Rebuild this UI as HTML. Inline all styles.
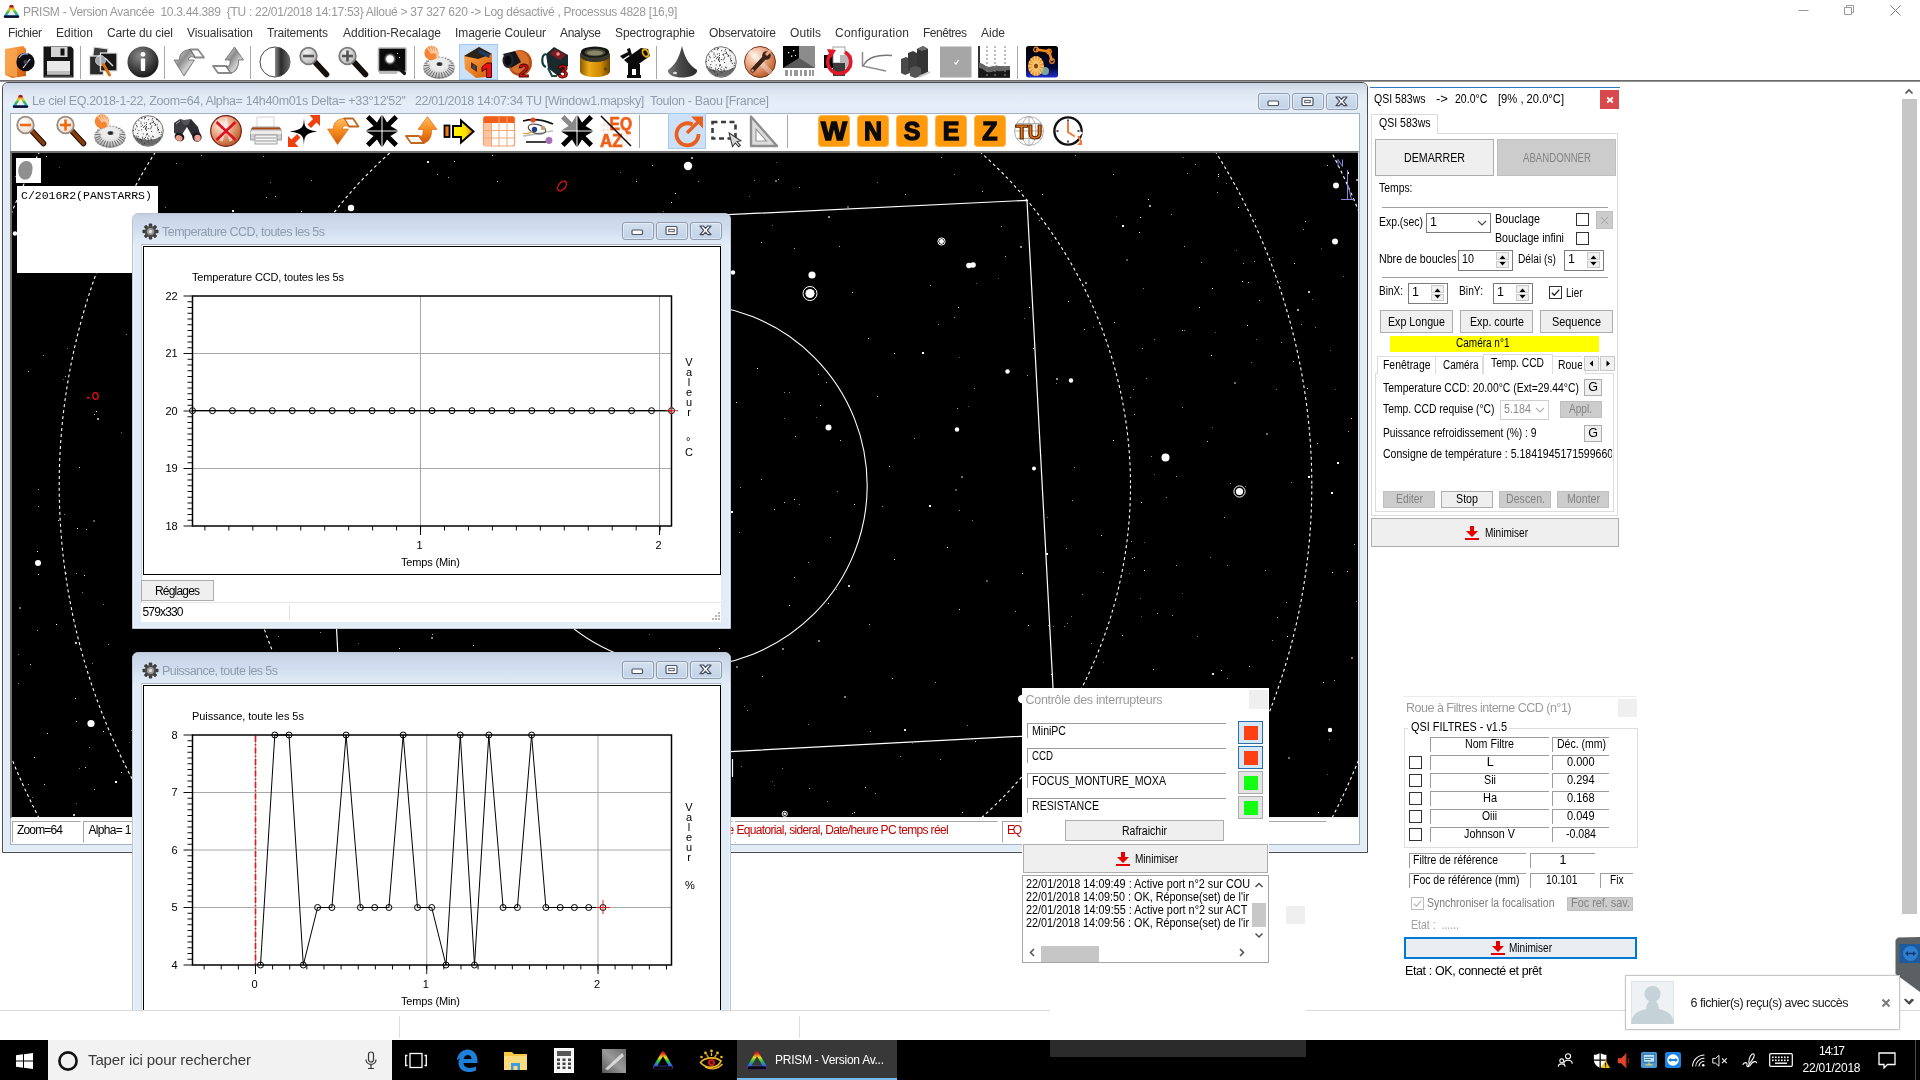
<!DOCTYPE html>
<html><head><meta charset="utf-8"><title>PRISM</title>
<style>
html,body{margin:0;padding:0;}
body{width:1920px;height:1080px;overflow:hidden;background:#fff;position:relative;font-family:"Liberation Sans",sans-serif;font-size:12px;}
.t{position:absolute;white-space:pre;line-height:1.25;font-family:"Liberation Sans",sans-serif;}
.r{position:absolute;box-sizing:border-box;}
svg{position:absolute;overflow:visible;}
.abs{position:absolute;}
</style></head>
<body>
<div id="L" style="position:absolute;left:0;top:0;width:1920px;height:1080px;will-change:transform;">
<!-- s_main -->
<div class="r " style="left:0px;top:0px;width:1920px;height:23px;background:#fff;"></div>
<svg style="left:3px;top:4px" width="17" height="15" viewBox="0 0 17 15"><defs><linearGradient id="pgl" x1="0" y1="0" x2="0" y2="1"><stop offset="0" stop-color="#e02020"/><stop offset=".3" stop-color="#e8d020"/><stop offset=".6" stop-color="#30c040"/><stop offset=".85" stop-color="#20b0e0"/><stop offset="1" stop-color="#101840"/></linearGradient></defs><path d="M8.500 2L15 12.500H2Z" fill="#f4e8f8" stroke="url(#pgl)" stroke-width="2.600" stroke-linejoin="round"/><path d="M2.300 12.600H14.700" stroke="#0c1030" stroke-width="2.400" stroke-linecap="round"/><path d="M7.300 2.200H9.700" stroke="#a01828" stroke-width="2" stroke-linecap="round"/></svg>
<span class="t" style="left:23px;top:5px;font-size:12px;color:#999;letter-spacing:-0.285px;">PRISM - Version Avancée  10.3.44.389  {TU : 22/01/2018 14:17:53} Alloué &gt; 37 327 620 -&gt; Log désactivé , Processus 4828 [16,9]</span>
<svg style="left:1798px;top:4px" width="110" height="14" viewBox="0 0 110 14"><path d="M0.5 6.5h10" stroke="#999" stroke-width="1"/><path d="M46.5 3.5h7v7h-7z M48.5 3.5v-2h7v7h-2" fill="none" stroke="#999" stroke-width="1"/><path d="M92.500 1.500l10 10M102.500 1.500l-10 10" stroke="#808080" stroke-width="1"/></svg>
<span class="t" style="left:8px;top:25.5px;font-size:12px;color:#333;letter-spacing:-0.336px;">Fichier</span>
<span class="t" style="left:56px;top:25.5px;font-size:12px;color:#333;letter-spacing:0.052px;">Edition</span>
<span class="t" style="left:107px;top:25.5px;font-size:12px;color:#333;letter-spacing:-0.113px;">Carte du ciel</span>
<span class="t" style="left:187px;top:25.5px;font-size:12px;color:#333;letter-spacing:-0.096px;">Visualisation</span>
<span class="t" style="left:267px;top:25.5px;font-size:12px;color:#333;letter-spacing:-0.191px;">Traitements</span>
<span class="t" style="left:343px;top:25.5px;font-size:12px;color:#333;letter-spacing:-0.004px;">Addition-Recalage</span>
<span class="t" style="left:455px;top:25.5px;font-size:12px;color:#333;letter-spacing:-0.070px;">Imagerie Couleur</span>
<span class="t" style="left:560px;top:25.5px;font-size:12px;color:#333;letter-spacing:-0.281px;">Analyse</span>
<span class="t" style="left:615px;top:25.5px;font-size:12px;color:#333;letter-spacing:-0.106px;">Spectrographie</span>
<span class="t" style="left:709px;top:25.5px;font-size:12px;color:#333;letter-spacing:-0.153px;">Observatoire</span>
<span class="t" style="left:790px;top:25.5px;font-size:12px;color:#333;letter-spacing:0.066px;">Outils</span>
<span class="t" style="left:835px;top:25.5px;font-size:12px;color:#333;letter-spacing:0.219px;">Configuration</span>
<span class="t" style="left:923px;top:25.5px;font-size:12px;color:#333;letter-spacing:-0.478px;">Fenêtres</span>
<span class="t" style="left:981px;top:25.5px;font-size:12px;color:#333;letter-spacing:-0.005px;">Aide</span>
<div class="r " style="left:0px;top:80px;width:1920px;height:2px;background:linear-gradient(#555,#aaa);"></div>
<svg width="0" height="0" style="left:0;top:0"><defs>
<linearGradient id="gOr" x1="0" y1="0" x2="1" y2="1"><stop offset="0" stop-color="#fbb15c"/><stop offset=".5" stop-color="#f0842a"/><stop offset="1" stop-color="#c85a0c"/></linearGradient>
<linearGradient id="gOrV" x1="0" y1="0" x2="0" y2="1"><stop offset="0" stop-color="#ffc060"/><stop offset=".5" stop-color="#f58a1c"/><stop offset="1" stop-color="#d05a08"/></linearGradient>
<linearGradient id="gSil" x1="0" y1="0" x2="1" y2="1"><stop offset="0" stop-color="#ececec"/><stop offset=".4" stop-color="#8c8c8c"/><stop offset=".65" stop-color="#d0d0d0"/><stop offset="1" stop-color="#505050"/></linearGradient>
<radialGradient id="gInfo" cx=".4" cy=".3" r=".8"><stop offset="0" stop-color="#8a8a8a"/><stop offset=".6" stop-color="#3a3a3a"/><stop offset="1" stop-color="#0c0c0c"/></radialGradient>
<linearGradient id="gDk" x1="0" y1="0" x2="1" y2="0"><stop offset="0" stop-color="#8a8a8a"/><stop offset=".4" stop-color="#2a2a2a"/><stop offset="1" stop-color="#6a6a6a"/></linearGradient>
<radialGradient id="gLens" cx=".4" cy=".35" r=".7"><stop offset="0" stop-color="#f4f4f4"/><stop offset="1" stop-color="#b4b4b4"/></radialGradient>
<radialGradient id="gLensO" cx=".4" cy=".35" r=".7"><stop offset="0" stop-color="#fff"/><stop offset="1" stop-color="#e8d8cc"/></radialGradient>
<radialGradient id="gGear" cx=".5" cy=".35" r=".7"><stop offset="0" stop-color="#ffffff"/><stop offset=".6" stop-color="#dcdcdc"/><stop offset="1" stop-color="#a4a4a4"/></radialGradient>
<radialGradient id="gGlobe" cx=".4" cy=".3" r=".8"><stop offset="0" stop-color="#fff"/><stop offset=".7" stop-color="#f0f0f0"/><stop offset="1" stop-color="#bdbdbd"/></radialGradient>
<radialGradient id="gCop" cx=".35" cy=".3" r=".9"><stop offset="0" stop-color="#fff2e8"/><stop offset=".35" stop-color="#eeb090"/><stop offset=".7" stop-color="#c87040"/><stop offset="1" stop-color="#8a3c18"/></radialGradient>
<linearGradient id="gCone" x1="0" y1="0" x2="1" y2="0"><stop offset="0" stop-color="#7a7a7a"/><stop offset=".4" stop-color="#4a4a4a"/><stop offset="1" stop-color="#2a2a2a"/></linearGradient>
<linearGradient id="gYel" x1="0" y1="0" x2="1" y2="0"><stop offset="0" stop-color="#8a5a00"/><stop offset=".3" stop-color="#eeaa18"/><stop offset=".7" stop-color="#cc8800"/><stop offset="1" stop-color="#6a4400"/></linearGradient>
<linearGradient id="gYA" x1="0" y1="0" x2="1" y2="0"><stop offset="0" stop-color="#fff800"/><stop offset=".6" stop-color="#ffe000"/><stop offset="1" stop-color="#f08000"/></linearGradient>
<radialGradient id="gBlob" cx=".5" cy=".5" r=".5"><stop offset="0" stop-color="#fff"/><stop offset=".5" stop-color="#ddd"/><stop offset="1" stop-color="#000" stop-opacity="0"/></radialGradient>
<linearGradient id="gBlk" x1="0" y1="0" x2="0" y2="1"><stop offset="0" stop-color="#000"/><stop offset=".7" stop-color="#04083a"/><stop offset="1" stop-color="#2030d0"/></linearGradient>
</defs></svg>
<svg style="left:3.5px;top:46px" width="32" height="32" viewBox="0 0 32 32"><path d="M1 3L19 0L22 3V30L8 32L1 29Z" fill="url(#gOr)"/><path d="M1 5L13 3V31L1 29Z" fill="#f9a650" opacity=".8"/><circle cx="21.500" cy="16" r="9.200" fill="#0c0c10"/><path d="M15 12A8 8 0 0 1 24 8" stroke="#8aa0d8" stroke-width="1.500" fill="none"/><path d="M19 22L26 13" stroke="#d8d8e8" stroke-width="1.200"/><circle cx="21.500" cy="16" r="2" fill="#445"/></svg>
<svg style="left:42.5px;top:46px" width="32" height="32" viewBox="0 0 32 32"><path d="M.5.500H28L30.500 3V31.500H.500Z" fill="#151515"/><rect x="8" y="1" width="16.500" height="10" fill="#d4d4d4"/><rect x="17.500" y="2.500" width="4" height="7" fill="#111"/><rect x="4" y="15" width="23" height="13.500" fill="#e9e9e9"/><rect x="4" y="25" width="23" height="3.500" fill="#bdbdbd"/><rect x="2" y="29.500" width="27" height="1.500" fill="#444"/></svg>
<div class="r" style="left:80px;top:45.500px;width:1px;height:33px;background:#a8a8a8"></div>
<svg style="left:88px;top:46px" width="32" height="32" viewBox="0 0 32 32"><path d="M6 1L20 3L18 18L4 16Z" fill="#3c3c3c" stroke="#dcdcdc" stroke-width="1.200"/><rect x="1.500" y="10" width="14" height="19" fill="#2a2a2a" stroke="#e4e4e4" stroke-width="1.300"/><rect x="12.500" y="7" width="16.500" height="18" fill="#181818" stroke="#e4e4e4" stroke-width="1.300"/><circle cx="12.500" cy="14.500" r="5" fill="#cfd6e0" opacity=".75" stroke="#eee" stroke-width="1"/><path d="M15.500 18.500L21.500 29" stroke="#e0700c" stroke-width="3" stroke-linecap="round"/><path d="M17 12L25 20" stroke="#ddd" stroke-width="1.500"/></svg>
<svg style="left:126.5px;top:46px" width="32" height="32" viewBox="0 0 32 32"><circle cx="16" cy="16" r="15.500" fill="url(#gInfo)"/><circle cx="16" cy="8.300" r="2.400" fill="#fff"/><rect x="13.800" y="12.500" width="4.400" height="12.500" rx="1" fill="#fff"/></svg>
<div class="r" style="left:164px;top:45.500px;width:1px;height:33px;background:#a8a8a8"></div>
<svg style="left:172.5px;top:46px" width="32" height="32" viewBox="0 0 32 32"><path d="M17 3.500H25L31 11.500H22Z" fill="#fff" stroke="#8a8a8a" stroke-width="1.800" stroke-linejoin="round"/><path d="M17 3.500C9 4 6 9 6.500 14H1L11 30L21.500 14H15.500C15.500 11 18 10 22 11.500Z" fill="url(#gSil)" stroke="#5a5a5a" stroke-width=".7"/></svg>
<svg style="left:212px;top:46px" width="32" height="32" viewBox="0 0 32 32"><path d="M1 20H14L19 27H6Z" fill="#fff" stroke="#8a8a8a" stroke-width="1.800" stroke-linejoin="round"/><path d="M19 27C25 26 27 19 26.500 14H31.500L22.500 1L13 14H18C18.500 19 17 21 14 20Z" fill="url(#gSil)" stroke="#5a5a5a" stroke-width=".7"/></svg>
<div class="r" style="left:250px;top:45.500px;width:1px;height:33px;background:#a8a8a8"></div>
<svg style="left:259px;top:46px" width="32" height="32" viewBox="0 0 32 32"><circle cx="16" cy="16" r="15" fill="#fff" stroke="#333" stroke-width=".9"/><path d="M16 1A15 15 0 0 1 16 31Z" fill="url(#gDk)"/></svg>
<svg style="left:297.5px;top:46px" width="32" height="32" viewBox="0 0 32 32"><path d="M16.500 15.500L28.500 28.500" stroke="#1a0a02" stroke-width="5.600" stroke-linecap="round"/><path d="M17 16L28.500 28.500" stroke="#111" stroke-width="3.600" stroke-linecap="round"/><circle cx="10.500" cy="10" r="8.300" fill="url(#gLens)" stroke="#7c7c7c" stroke-width="1.800"/><rect x="5" y="8.700" width="11" height="2.600" fill="#555"/></svg>
<svg style="left:336.5px;top:46px" width="32" height="32" viewBox="0 0 32 32"><path d="M16.500 15.500L28.500 28.500" stroke="#1a0a02" stroke-width="5.600" stroke-linecap="round"/><path d="M17 16L28.500 28.500" stroke="#111" stroke-width="3.600" stroke-linecap="round"/><circle cx="10.500" cy="10" r="8.300" fill="url(#gLens)" stroke="#7c7c7c" stroke-width="1.800"/><rect x="5" y="8.700" width="11" height="2.600" fill="#555"/><rect x="9.200" y="4.500" width="2.600" height="11" fill="#555"/></svg>
<svg style="left:377px;top:46px" width="32" height="32" viewBox="0 0 32 32"><rect x="1.500" y="2" width="27.500" height="23.500" rx="1" fill="#0a0a0a" stroke="#b4b4b4" stroke-width="1.600"/><circle cx="13" cy="13" r="7" fill="url(#gBlob)"/><circle cx="13" cy="13" r="3.200" fill="#fff"/><rect x="20" y="7" width="1" height="1" fill="#fff"/><rect x="22" y="11" width="1" height="1" fill="#ccc"/><path d="M18 18.500L27.500 27.500" stroke="#111" stroke-width="3.200" stroke-linecap="round"/><path d="M2 27H20" stroke="#aaa" stroke-width="1.500"/></svg>
<div class="r" style="left:414px;top:45.500px;width:1px;height:33px;background:#a8a8a8"></div>
<svg style="left:422px;top:46px" width="33" height="33" viewBox="0 0 33 33"><ellipse cx="17" cy="22.2" rx="15.5" ry="10.5" fill="#8a8a8a"/><ellipse cx="17" cy="21" rx="15.5" ry="10.5" fill="url(#gGear)"/><path d="M26.5 20.8L32.4 23.5M26.0 22.3L31.5 25.9M24.9 23.7L29.8 28.2M23.4 24.9L27.3 30.1M21.5 25.8L24.2 31.5M19.3 26.3L20.7 32.4M17.0 26.5L17.0 32.7M14.7 26.3L13.3 32.4M12.5 25.8L9.8 31.5M10.6 24.9L6.7 30.1M9.1 23.7L4.3 28.2M8.0 22.3L2.5 25.9M7.5 20.8L1.6 23.5M7.5 19.2L1.6 19.7M5.4 17.0L2.5 17.3M6.8 15.2L4.2 15.0M8.8 13.7L6.7 13.1M11.2 12.6L9.8 11.7M14.0 11.8L13.3 10.8M17.0 11.6L17.0 10.5M20.0 11.8L20.7 10.8M22.8 12.6L24.2 11.7M25.2 13.7L27.3 13.1M27.2 15.2L29.7 15.0M28.6 17.0L31.5 17.3M26.5 19.2L32.4 19.7" stroke="#5e5e5e" stroke-width=".9"/><ellipse cx="17" cy="19" rx="8.525" ry="5.25" fill="#e9e9e9" opacity=".7"/><ellipse cx="17.5" cy="18" rx="3" ry="2" fill="#4a4a4a"/><ellipse cx="17.5" cy="18" rx="1.400" ry=".9" fill="#1a1a1a"/><circle cx="9.5" cy="7" r="7.2" fill="#f58636"/><path d="M9.7 7.6L5.4 1.3M10.9 7.1L8.0 0.2M12.1 7.1L11.0 0.2M13.3 7.6L13.6 1.3M14.1 8.5L15.6 3.5M14.5 9.7L16.5 6.3M14.3 10.9L16.1 9.2" stroke="#fcc9a0" stroke-width="1.500"/></svg>
<div class="r" style="left:459px;top:43.500px;width:39px;height:36.500px;background:#cbe1f8;border:1px solid #a4ccf2"></div>
<svg style="left:462px;top:46px" width="32" height="32" viewBox="0 0 32 32"><path d="M2 10L17 1L30 8V18L24 22V31L14 32L3 23Z" fill="url(#gOr)"/><path d="M2 10L17 1L30 8L16 13Z" fill="#2a2418"/><path d="M16 3L28 8.500L27 12L17 7Z" fill="#1c3c6c"/><path d="M9 16L15 20V26L9 22Z" fill="#5a2a08"/><circle cx="12" cy="21" r="1.700" fill="#28508c"/><path d="M20 21l5-4h4.500v14.500h-5v-9l-4.500 3z" fill="#f01010" stroke="#300" stroke-width=".9" stroke-linejoin="round"/></svg>
<svg style="left:501px;top:46px" width="32" height="32" viewBox="0 0 32 32"><ellipse cx="19" cy="17" rx="12" ry="13" fill="#b8521a"/><ellipse cx="18" cy="16" rx="10" ry="11" fill="#d8722a"/><path d="M2 8L14 5L20 16L10 22Z" fill="#15151c"/><ellipse cx="7" cy="14.500" rx="5.500" ry="7.500" fill="#25252d"/><ellipse cx="7" cy="14.500" rx="3.500" ry="5" fill="#0a0a0e"/><text x="17.5" y="31" font-family="Liberation Sans,sans-serif" font-weight="bold" font-size="19" fill="#f01010" stroke="#300" stroke-width=".9">2</text></svg>
<svg style="left:540px;top:46px" width="32" height="32" viewBox="0 0 32 32"><path d="M6 8L14 1L28 9V20L18 30L8 22Z" fill="#1a2a2c"/><path d="M10 8L15 3L26 9L20 14Z" fill="#7a1c24"/><circle cx="18" cy="8" r="1.800" fill="#ff9090"/><path d="M6 8C1 9 1 19 6 21" stroke="#123c3c" stroke-width="2.200" fill="none"/><path d="M8 22L12 30L17 30" stroke="#1c4848" stroke-width="2" fill="none"/><text x="17.5" y="31.5" font-family="Liberation Sans,sans-serif" font-weight="bold" font-size="19" fill="#f01010" stroke="#300" stroke-width=".9">3</text></svg>
<svg style="left:579px;top:46px" width="32" height="32" viewBox="0 0 32 32"><path d="M1 10V25C1 33 31 33 31 25V10Z" fill="url(#gYel)"/><ellipse cx="16" cy="9" rx="15" ry="7" fill="#2a2a22"/><path d="M2 6V11C2 17 30 17 30 11V6Z" fill="#3a382c"/><ellipse cx="16" cy="6" rx="14" ry="5.500" fill="#15150f"/><ellipse cx="16" cy="6.500" rx="10.500" ry="3.800" fill="#4a4a3c"/><ellipse cx="16" cy="7" rx="8" ry="2.600" fill="#8a8468"/><circle cx="26.500" cy="23" r="1.700" fill="#6a4400"/></svg>
<svg style="left:619px;top:46px" width="32" height="32" viewBox="0 0 32 32"><path d="M5 14L22 2L29 3L31 10L14 22Z" fill="#0a0a0a"/><ellipse cx="26.500" cy="7" rx="3.500" ry="5" transform="rotate(-30 26.500 7)" fill="#f0b000"/><ellipse cx="26.500" cy="7" rx="1.800" ry="3" transform="rotate(-30 26.500 7)" fill="#111"/><path d="M1 10L9 6L10 9L4 13Z M8 3L11 2L13 9L10 10Z" fill="#0a0a0a"/><path d="M9 18H21V31H17V23H13V31H9Z" fill="#0a0a0a"/><rect x="8" y="29" width="14" height="3" fill="#0a0a0a"/></svg>
<div class="r" style="left:656px;top:45.500px;width:1px;height:33px;background:#a8a8a8"></div>
<svg style="left:666.5px;top:46px" width="32" height="32" viewBox="0 0 32 32"><path d="M15 0C17 8 20 18 30 24C31 29 22 31.500 15 31.500C8 31.500 0 29 1 24C10 18 13 8 15 0Z" fill="url(#gCone)"/><ellipse cx="8" cy="27" rx="2" ry="1.200" fill="#ddd"/></svg>
<svg style="left:705px;top:46px" width="32" height="32" viewBox="0 0 32 32"><circle cx="16" cy="16" r="15.3" fill="url(#gGlobe)" stroke="#555" stroke-width=".8"/><path d="M1.618 20.59A15.3 15.3 0 0 0 30.382 20.59A19.89 13.77 0 0 1 1.618 20.59Z" fill="#555" opacity=".85"/><rect x="16.3" y="26.3" width="1" height="1" fill="#333"/><rect x="7.7" y="23.8" width="1" height="1" fill="#333"/><rect x="12.9" y="12.8" width="1" height="1" fill="#333"/><rect x="28.9" y="16.6" width="1" height="1" fill="#333"/><rect x="15.1" y="22.6" width="1" height="1" fill="#333"/><rect x="25.6" y="15.2" width="1" height="1" fill="#333"/><rect x="20.7" y="6.8" width="1" height="1" fill="#333"/><rect x="11.8" y="11.1" width="1" height="1" fill="#333"/><rect x="6.4" y="5.2" width="1" height="1" fill="#333"/><rect x="3.0" y="13.7" width="1" height="1" fill="#333"/><rect x="13.7" y="12.2" width="1" height="1" fill="#333"/><rect x="16.1" y="4.2" width="1" height="1" fill="#333"/><rect x="14.7" y="18.0" width="1" height="1" fill="#333"/><rect x="22.2" y="7.9" width="1" height="1" fill="#333"/><rect x="12.8" y="2.0" width="1" height="1" fill="#333"/><rect x="12.3" y="1.8" width="1" height="1" fill="#333"/><rect x="5.1" y="23.6" width="1" height="1" fill="#333"/><rect x="2.1" y="20.3" width="1" height="1" fill="#333"/><rect x="18.8" y="12.3" width="1" height="1" fill="#333"/><rect x="20.0" y="20.7" width="1" height="1" fill="#333"/><rect x="25.0" y="13.4" width="1" height="1" fill="#333"/><rect x="9.9" y="9.7" width="1" height="1" fill="#333"/><rect x="6.4" y="15.1" width="1" height="1" fill="#333"/><rect x="8.8" y="24.6" width="1" height="1" fill="#333"/><rect x="3.4" y="8.4" width="1" height="1" fill="#333"/><rect x="9.6" y="2.6" width="1" height="1" fill="#333"/><rect x="24.6" y="4.0" width="1" height="1" fill="#333"/><rect x="12.7" y="10.3" width="1" height="1" fill="#333"/><rect x="24.7" y="4.4" width="1" height="1" fill="#333"/><rect x="24.7" y="9.3" width="1" height="1" fill="#333"/><rect x="14.0" y="8.9" width="1" height="1" fill="#333"/><rect x="21.0" y="5.8" width="1" height="1" fill="#333"/><rect x="14.7" y="19.1" width="1" height="1" fill="#333"/><rect x="24.4" y="3.9" width="1" height="1" fill="#333"/><rect x="26.7" y="22.4" width="1" height="1" fill="#333"/><rect x="10.7" y="18.5" width="1" height="1" fill="#333"/><rect x="12.0" y="27.9" width="1" height="1" fill="#333"/><rect x="17.7" y="13.3" width="1" height="1" fill="#333"/><rect x="13.2" y="13.4" width="1" height="1" fill="#333"/><rect x="13.8" y="7.2" width="1" height="1" fill="#333"/><rect x="26.2" y="5.6" width="1" height="1" fill="#333"/><rect x="0.8" y="15.0" width="1" height="1" fill="#333"/><rect x="14.0" y="19.3" width="1" height="1" fill="#333"/><rect x="13.4" y="14.0" width="1" height="1" fill="#333"/><rect x="18.5" y="24.4" width="1" height="1" fill="#333"/><rect x="11.0" y="11.8" width="1" height="1" fill="#333"/><rect x="28.7" y="19.1" width="1" height="1" fill="#333"/><rect x="9.9" y="28.7" width="1" height="1" fill="#333"/><rect x="22.7" y="10.0" width="1" height="1" fill="#333"/><rect x="5.2" y="18.1" width="1" height="1" fill="#333"/><rect x="8.5" y="6.6" width="1" height="1" fill="#333"/><rect x="4.7" y="11.3" width="1" height="1" fill="#333"/><rect x="25.2" y="11.7" width="1" height="1" fill="#333"/><rect x="4.2" y="20.7" width="1" height="1" fill="#333"/><rect x="16.1" y="23.5" width="1" height="1" fill="#333"/><rect x="26.0" y="14.0" width="1" height="1" fill="#333"/><rect x="14.0" y="15.0" width="1" height="1" fill="#333"/><rect x="5.9" y="21.2" width="1" height="1" fill="#333"/><rect x="26.9" y="16.9" width="1" height="1" fill="#333"/><rect x="13.1" y="12.8" width="1" height="1" fill="#333"/><rect x="8.5" y="8.3" width="1" height="1" fill="#333"/><rect x="11.8" y="7.6" width="1" height="1" fill="#333"/><rect x="12.1" y="3.3" width="1" height="1" fill="#333"/><rect x="19.1" y="16.0" width="1" height="1" fill="#333"/><rect x="9.0" y="2.6" width="1" height="1" fill="#333"/><rect x="15.4" y="25.4" width="1" height="1" fill="#333"/><rect x="8.6" y="10.9" width="1" height="1" fill="#333"/><rect x="10.1" y="21.7" width="1" height="1" fill="#333"/><rect x="7.8" y="23.8" width="1" height="1" fill="#333"/><rect x="12.7" y="24.1" width="1" height="1" fill="#333"/><rect x="15.8" y="13.1" width="1" height="1" fill="#333"/><rect x="4.1" y="10.2" width="1" height="1" fill="#333"/><rect x="12.9" y="21.9" width="1" height="1" fill="#333"/><rect x="17.9" y="8.7" width="1" height="1" fill="#333"/><rect x="19.2" y="24.4" width="1" height="1" fill="#333"/><rect x="14.0" y="11.1" width="1" height="1" fill="#333"/><rect x="11.8" y="23.1" width="1" height="1" fill="#333"/><rect x="20.4" y="7.1" width="1" height="1" fill="#333"/><rect x="19.2" y="10.7" width="1" height="1" fill="#333"/><rect x="9.4" y="25.6" width="1" height="1" fill="#333"/><rect x="22.9" y="9.0" width="1" height="1" fill="#333"/><rect x="16.3" y="20.5" width="1" height="1" fill="#333"/><rect x="9.2" y="14.3" width="1" height="1" fill="#333"/><rect x="20.2" y="2.9" width="1" height="1" fill="#333"/><rect x="18.6" y="22.6" width="1" height="1" fill="#333"/><rect x="19.6" y="4.5" width="1" height="1" fill="#333"/><rect x="18.5" y="7.4" width="1" height="1" fill="#333"/><rect x="20.9" y="21.3" width="1" height="1" fill="#333"/><rect x="17.6" y="8.1" width="1" height="1" fill="#333"/><rect x="10.1" y="23.3" width="1" height="1" fill="#333"/></svg>
<svg style="left:744px;top:46px" width="32" height="32" viewBox="0 0 32 32"><circle cx="16" cy="16" r="15.500" fill="url(#gCop)" stroke="#6a2c10" stroke-width=".9"/><path d="M4 4L28 28" stroke="#fff" stroke-width="5" opacity=".35"/><path d="M8.500 24.500L21 11" stroke="#3a2418" stroke-width="4.200" stroke-linecap="round"/><circle cx="22.500" cy="9.500" r="4.300" fill="#3a2418"/><path d="M22 9L27 4" stroke="#e8a888" stroke-width="3"/><circle cx="8.500" cy="24.500" r="1.300" fill="#e0a080"/></svg>
<svg style="left:783px;top:46px" width="32" height="32" viewBox="0 0 32 32"><rect x="0" y="0" width="16" height="22" fill="#000"/><rect x="16" y="0" width="16" height="22" fill="#8c8c8c"/><path d="M0 22L16 12L32 22Z" fill="#5a5a5a"/><rect x="5" y="6" width="1.300" height="1.300" fill="#fff"/><rect x="10" y="4" width="1.300" height="1.300" fill="#fff"/><rect x="8" y="9.500" width="1.300" height="1.300" fill="#fff"/><rect x="12" y="9" width="1" height="1" fill="#fff"/><g fill="#999"><rect x="2" y="24" width="3" height="6"/><rect x="7" y="24" width="2" height="6"/><rect x="11" y="24" width="4" height="6"/><rect x="17" y="24" width="2" height="6"/><rect x="21" y="24" width="3" height="6"/><rect x="26" y="24" width="2" height="6"/><rect x="29" y="24" width="2" height="6"/></g></svg>
<svg style="left:823px;top:46px" width="32" height="32" viewBox="0 0 32 32"><rect x="1" y="9" width="12" height="13" fill="#0a0a0a"/><rect x="10" y="1" width="12" height="16" fill="#fff" stroke="#888" stroke-width=".8"/><rect x="17" y="9" width="12" height="13" fill="#b8b8b8"/><rect x="10" y="17" width="12" height="13" fill="#3c3c3c"/><path d="M9 7A11.500 11.500 0 1 0 22 6" fill="none" stroke="#e01828" stroke-width="3.600"/><path d="M4 3L13 4L8 12Z" fill="#e01828"/></svg>
<svg style="left:861px;top:46px" width="32" height="32" viewBox="0 0 32 32"><path d="M1.500 6V20L25 25" fill="none" stroke="#8c8c8c" stroke-width="1.500"/><path d="M2 20C7 11 16 8.500 31 9.500" fill="none" stroke="#777" stroke-width="1.400"/></svg>
<svg style="left:899px;top:46px" width="32" height="32" viewBox="0 0 32 32"><path d="M2 13L7 11L11 13V27L6 29L2 27Z" fill="#4a4a4a"/><path d="M9 7L14 5L18 7V24L13 26L9 24Z" fill="#3a3a3a"/><path d="M18 3L24 0L29 3V26L23 29L18 26Z" fill="#333"/><path d="M11 22L17 20L22 22V30L16 32L11 30Z" fill="#555"/><path d="M18 3L24 0L29 3L23 5Z" fill="#6a6a6a"/><path d="M20 31L31 26" stroke="#ccc" stroke-width="2"/></svg>
<svg style="left:939.5px;top:46px" width="32" height="32" viewBox="0 0 32 32"><rect x="0" y=".500" width="31.500" height="31" fill="#a6a6a6"/><path d="M14.500 16.500L16 18L18.500 14" stroke="#fff" stroke-width="1.300" fill="none"/></svg>
<svg style="left:978px;top:46px" width="32" height="32" viewBox="0 0 32 32"><rect x="0" y="0" width="32" height="32" fill="#fff"/><path d="M1 0V31H32" stroke="#000" stroke-width="1.600" fill="none"/><path d="M1 17C5 17 7 21 11 21C15 21 17 19 20 20C24 21 26 20 32 20V31H1Z" fill="#1a1a1a"/><path d="M1 17C5 17 7 21 11 21C15 21 17 19 20 20C24 21 26 20 32 20V24C26 24 24 26 20 25C16 24 14 27 10 26C6 25 5 22 1 22Z" fill="#666"/><path d="M9 0V31M17 0V31M27 0V31" stroke="#888" stroke-width="1.100" stroke-dasharray="2 2"/></svg>
<div class="r" style="left:1016.500px;top:45.500px;width:1px;height:33px;background:#a8a8a8"></div>
<svg style="left:1026px;top:46px" width="32" height="32" viewBox="0 0 32 32"><rect x="0" y="0" width="32" height="31.500" rx="2.500" fill="url(#gBlk)"/><ellipse cx="10" cy="20" rx="8" ry="10" fill="#f0962a"/><path d="M12.0 20.0L18.0 20.0M11.8 21.1L17.2 24.3M11.2 22.0L15.0 27.8M10.4 22.4L11.8 29.7M9.6 22.4L8.2 29.7M8.8 22.0L5.0 27.8M8.2 21.1L2.8 24.3M8.0 20.0L2.0 20.0M8.2 18.9L2.8 15.7M8.8 18.0L5.0 12.2M9.6 17.6L8.2 10.3M10.4 17.6L11.8 10.3M11.2 18.0L15.0 12.2M11.8 18.9L17.2 15.7" stroke="#ffd890" stroke-width="1.100"/><ellipse cx="10" cy="20" rx="2" ry="2.500" fill="#7a4a10"/><circle cx="19" cy="25" r="4" fill="#9ac8a0" opacity=".8"/><path d="M10 3.500L23 5.500L26 15" stroke="#f08820" stroke-width="2.600" fill="none"/><circle cx="10" cy="3.500" r="2.300" fill="none" stroke="#f08820" stroke-width="1.200"/><circle cx="23" cy="5.500" r="2.300" fill="none" stroke="#f08820" stroke-width="1.200"/><circle cx="26" cy="15" r="2.300" fill="none" stroke="#f08820" stroke-width="1.200"/></svg>
<!-- s_sky -->
<div class="r " style="left:2px;top:82px;width:1366px;height:771px;background:#e2ecf7;border:1px solid #474b54;border-radius:6px 6px 0 0;box-shadow:inset 0 0 0 1px #eef4fb;"></div>
<div class="r " style="left:3px;top:83px;width:1364px;height:30px;background:linear-gradient(#c8d2e0 0%,#d5dfec 14%,#e1e9f4 40%,#e6eef8 72%,#e3ecf7 100%);border-radius:5px 5px 0 0;"></div>
<svg style="left:11.5px;top:93.5px" width="17" height="15" viewBox="0 0 17 15"><defs><linearGradient id="pgl" x1="0" y1="0" x2="0" y2="1"><stop offset="0" stop-color="#e02020"/><stop offset=".3" stop-color="#e8d020"/><stop offset=".6" stop-color="#30c040"/><stop offset=".85" stop-color="#20b0e0"/><stop offset="1" stop-color="#101840"/></linearGradient></defs><path d="M8.500 2L15 12.500H2Z" fill="#f4e8f8" stroke="url(#pgl)" stroke-width="2.600" stroke-linejoin="round"/><path d="M2.300 12.600H14.700" stroke="#0c1030" stroke-width="2.400" stroke-linecap="round"/><path d="M7.300 2.200H9.700" stroke="#a01828" stroke-width="2" stroke-linecap="round"/></svg>
<span class="t" style="left:32px;top:93.8px;font-size:12.5px;color:#8f9cac;letter-spacing:-0.357px;">Le ciel EQ.2018-1-22, Zoom=64, Alpha= 14h40m01s Delta= +33°12'52''   22/01/2018 14:07:34 TU [Window1.mapsky]  Toulon - Baou [France]</span>
<div class="r " style="left:1258px;top:92.5px;width:31.5px;height:17.5px;background:linear-gradient(#d3e0ef,#c2d2e5);border:1px solid #8e9db2;border-radius:3px;box-shadow:inset 0 0 0 1px rgba(255,255,255,.45);"></div>
<div class="r " style="left:1292px;top:92.5px;width:31.5px;height:17.5px;background:linear-gradient(#d3e0ef,#c2d2e5);border:1px solid #8e9db2;border-radius:3px;box-shadow:inset 0 0 0 1px rgba(255,255,255,.45);"></div>
<div class="r " style="left:1326px;top:92.5px;width:31.5px;height:17.5px;background:linear-gradient(#d3e0ef,#c2d2e5);border:1px solid #8e9db2;border-radius:3px;box-shadow:inset 0 0 0 1px rgba(255,255,255,.45);"></div>
<svg style="left:1258px;top:92.5px" width="100" height="18" viewBox="0 0 100 18">
<rect x="10" y="8" width="10.5" height="4.5" rx="1" fill="#fff" stroke="#4a5568" stroke-width="1.2"/>
<rect x="44" y="4.5" width="11" height="8" rx="1" fill="#fff" stroke="#4a5568" stroke-width="1.2"/><rect x="46.8" y="7.3" width="5.4" height="2.4" fill="#fff" stroke="#4a5568" stroke-width="1"/>
<path d="M78 4L81.300 4L83.500 6.400L85.700 4L89 4L85.300 8.300L89 12.600L85.700 12.600L83.500 10.200L81.300 12.600L78 12.600L81.700 8.300Z" fill="#fff" stroke="#444e60" stroke-width="1.200" stroke-linejoin="round"/>
</svg>
<div class="r " style="left:9.5px;top:112.5px;width:1350.5px;height:732px;background:#fff;border:1px solid #a3b1c2;"></div>
<svg style="left:14.5px;top:115px" width="32" height="32" viewBox="0 0 32 32"><path d="M16.500 15.500L28.500 28.500" stroke="#1a0a02" stroke-width="5.600" stroke-linecap="round"/><path d="M17 16L28.500 28.500" stroke="#8a3c08" stroke-width="3.600" stroke-linecap="round"/><circle cx="10.500" cy="10" r="8.300" fill="url(#gLensO)" stroke="#9a8a80" stroke-width="1.800"/><rect x="5" y="8.700" width="11" height="2.600" fill="#f06a10"/></svg>
<svg style="left:54.5px;top:115px" width="32" height="32" viewBox="0 0 32 32"><path d="M16.500 15.500L28.500 28.500" stroke="#1a0a02" stroke-width="5.600" stroke-linecap="round"/><path d="M17 16L28.500 28.500" stroke="#8a3c08" stroke-width="3.600" stroke-linecap="round"/><circle cx="10.500" cy="10" r="8.300" fill="url(#gLensO)" stroke="#9a8a80" stroke-width="1.800"/><rect x="5" y="8.700" width="11" height="2.600" fill="#f06a10"/><rect x="9.200" y="4.500" width="2.600" height="11" fill="#f06a10"/></svg>
<svg style="left:92.5px;top:114px" width="33" height="34" viewBox="0 0 33 34"><ellipse cx="17" cy="23.2" rx="15.5" ry="10.5" fill="#8a8a8a"/><ellipse cx="17" cy="22" rx="15.5" ry="10.5" fill="url(#gGear)"/><path d="M26.5 21.8L32.4 24.5M26.0 23.3L31.5 26.9M24.9 24.7L29.8 29.2M23.4 25.9L27.3 31.1M21.5 26.8L24.2 32.5M19.3 27.3L20.7 33.4M17.0 27.5L17.0 33.7M14.7 27.3L13.3 33.4M12.5 26.8L9.8 32.5M10.6 25.9L6.7 31.1M9.1 24.7L4.3 29.2M8.0 23.3L2.5 26.9M7.5 21.8L1.6 24.5M7.5 20.2L1.6 20.7M5.4 18.0L2.5 18.3M6.8 16.2L4.2 16.0M8.8 14.7L6.7 14.1M11.2 13.6L9.8 12.7M14.0 12.8L13.3 11.8M17.0 12.6L17.0 11.5M20.0 12.8L20.7 11.8M22.8 13.6L24.2 12.7M25.2 14.7L27.3 14.1M27.2 16.2L29.7 16.0M28.6 18.0L31.5 18.3M26.5 20.2L32.4 20.7" stroke="#5e5e5e" stroke-width=".9"/><ellipse cx="17" cy="20" rx="8.525" ry="5.25" fill="#e9e9e9" opacity=".7"/><ellipse cx="17.5" cy="19" rx="3" ry="2" fill="#4a4a4a"/><ellipse cx="17.5" cy="19" rx="1.400" ry=".9" fill="#1a1a1a"/><circle cx="9" cy="7.5" r="7.2" fill="#f58636"/><path d="M9.2 8.1L4.9 1.8M10.4 7.6L7.5 0.7M11.6 7.6L10.5 0.7M12.8 8.1L13.1 1.8M13.6 9.0L15.1 4.0M14.0 10.2L16.0 6.8M13.8 11.4L15.6 9.7" stroke="#fcc9a0" stroke-width="1.500"/></svg>
<svg style="left:131.5px;top:114.5px" width="32" height="32" viewBox="0 0 32 32"><circle cx="16" cy="16" r="15.3" fill="url(#gGlobe)" stroke="#555" stroke-width=".8"/><path d="M1.618 20.59A15.3 15.3 0 0 0 30.382 20.59A19.89 13.77 0 0 1 1.618 20.59Z" fill="#555" opacity=".85"/><rect x="16.3" y="26.3" width="1" height="1" fill="#333"/><rect x="7.7" y="23.8" width="1" height="1" fill="#333"/><rect x="12.9" y="12.8" width="1" height="1" fill="#333"/><rect x="28.9" y="16.6" width="1" height="1" fill="#333"/><rect x="15.1" y="22.6" width="1" height="1" fill="#333"/><rect x="25.6" y="15.2" width="1" height="1" fill="#333"/><rect x="20.7" y="6.8" width="1" height="1" fill="#333"/><rect x="11.8" y="11.1" width="1" height="1" fill="#333"/><rect x="6.4" y="5.2" width="1" height="1" fill="#333"/><rect x="3.0" y="13.7" width="1" height="1" fill="#333"/><rect x="13.7" y="12.2" width="1" height="1" fill="#333"/><rect x="16.1" y="4.2" width="1" height="1" fill="#333"/><rect x="14.7" y="18.0" width="1" height="1" fill="#333"/><rect x="22.2" y="7.9" width="1" height="1" fill="#333"/><rect x="12.8" y="2.0" width="1" height="1" fill="#333"/><rect x="12.3" y="1.8" width="1" height="1" fill="#333"/><rect x="5.1" y="23.6" width="1" height="1" fill="#333"/><rect x="2.1" y="20.3" width="1" height="1" fill="#333"/><rect x="18.8" y="12.3" width="1" height="1" fill="#333"/><rect x="20.0" y="20.7" width="1" height="1" fill="#333"/><rect x="25.0" y="13.4" width="1" height="1" fill="#333"/><rect x="9.9" y="9.7" width="1" height="1" fill="#333"/><rect x="6.4" y="15.1" width="1" height="1" fill="#333"/><rect x="8.8" y="24.6" width="1" height="1" fill="#333"/><rect x="3.4" y="8.4" width="1" height="1" fill="#333"/><rect x="9.6" y="2.6" width="1" height="1" fill="#333"/><rect x="24.6" y="4.0" width="1" height="1" fill="#333"/><rect x="12.7" y="10.3" width="1" height="1" fill="#333"/><rect x="24.7" y="4.4" width="1" height="1" fill="#333"/><rect x="24.7" y="9.3" width="1" height="1" fill="#333"/><rect x="14.0" y="8.9" width="1" height="1" fill="#333"/><rect x="21.0" y="5.8" width="1" height="1" fill="#333"/><rect x="14.7" y="19.1" width="1" height="1" fill="#333"/><rect x="24.4" y="3.9" width="1" height="1" fill="#333"/><rect x="26.7" y="22.4" width="1" height="1" fill="#333"/><rect x="10.7" y="18.5" width="1" height="1" fill="#333"/><rect x="12.0" y="27.9" width="1" height="1" fill="#333"/><rect x="17.7" y="13.3" width="1" height="1" fill="#333"/><rect x="13.2" y="13.4" width="1" height="1" fill="#333"/><rect x="13.8" y="7.2" width="1" height="1" fill="#333"/><rect x="26.2" y="5.6" width="1" height="1" fill="#333"/><rect x="0.8" y="15.0" width="1" height="1" fill="#333"/><rect x="14.0" y="19.3" width="1" height="1" fill="#333"/><rect x="13.4" y="14.0" width="1" height="1" fill="#333"/><rect x="18.5" y="24.4" width="1" height="1" fill="#333"/><rect x="11.0" y="11.8" width="1" height="1" fill="#333"/><rect x="28.7" y="19.1" width="1" height="1" fill="#333"/><rect x="9.9" y="28.7" width="1" height="1" fill="#333"/><rect x="22.7" y="10.0" width="1" height="1" fill="#333"/><rect x="5.2" y="18.1" width="1" height="1" fill="#333"/><rect x="8.5" y="6.6" width="1" height="1" fill="#333"/><rect x="4.7" y="11.3" width="1" height="1" fill="#333"/><rect x="25.2" y="11.7" width="1" height="1" fill="#333"/><rect x="4.2" y="20.7" width="1" height="1" fill="#333"/><rect x="16.1" y="23.5" width="1" height="1" fill="#333"/><rect x="26.0" y="14.0" width="1" height="1" fill="#333"/><rect x="14.0" y="15.0" width="1" height="1" fill="#333"/><rect x="5.9" y="21.2" width="1" height="1" fill="#333"/><rect x="26.9" y="16.9" width="1" height="1" fill="#333"/><rect x="13.1" y="12.8" width="1" height="1" fill="#333"/><rect x="8.5" y="8.3" width="1" height="1" fill="#333"/><rect x="11.8" y="7.6" width="1" height="1" fill="#333"/><rect x="12.1" y="3.3" width="1" height="1" fill="#333"/><rect x="19.1" y="16.0" width="1" height="1" fill="#333"/><rect x="9.0" y="2.6" width="1" height="1" fill="#333"/><rect x="15.4" y="25.4" width="1" height="1" fill="#333"/><rect x="8.6" y="10.9" width="1" height="1" fill="#333"/><rect x="10.1" y="21.7" width="1" height="1" fill="#333"/><rect x="7.8" y="23.8" width="1" height="1" fill="#333"/><rect x="12.7" y="24.1" width="1" height="1" fill="#333"/><rect x="15.8" y="13.1" width="1" height="1" fill="#333"/><rect x="4.1" y="10.2" width="1" height="1" fill="#333"/><rect x="12.9" y="21.9" width="1" height="1" fill="#333"/><rect x="17.9" y="8.7" width="1" height="1" fill="#333"/><rect x="19.2" y="24.4" width="1" height="1" fill="#333"/><rect x="14.0" y="11.1" width="1" height="1" fill="#333"/><rect x="11.8" y="23.1" width="1" height="1" fill="#333"/><rect x="20.4" y="7.1" width="1" height="1" fill="#333"/><rect x="19.2" y="10.7" width="1" height="1" fill="#333"/><rect x="9.4" y="25.6" width="1" height="1" fill="#333"/><rect x="22.9" y="9.0" width="1" height="1" fill="#333"/><rect x="16.3" y="20.5" width="1" height="1" fill="#333"/><rect x="9.2" y="14.3" width="1" height="1" fill="#333"/><rect x="20.2" y="2.9" width="1" height="1" fill="#333"/><rect x="18.6" y="22.6" width="1" height="1" fill="#333"/><rect x="19.6" y="4.5" width="1" height="1" fill="#333"/><rect x="18.5" y="7.4" width="1" height="1" fill="#333"/><rect x="20.9" y="21.3" width="1" height="1" fill="#333"/><rect x="17.6" y="8.1" width="1" height="1" fill="#333"/><rect x="10.1" y="23.3" width="1" height="1" fill="#333"/></svg>
<svg style="left:170.5px;top:115px" width="32" height="32" viewBox="0 0 32 32"><path d="M3 8L9 4L15 7L16 12L10 21L3 18Z" fill="#3a3a40"/><path d="M13 7L20 4L27 12L30 22L24 26L16 12Z" fill="#2c2c32"/><path d="M9 4L13 5L20 4L17 10L13 10Z" fill="#55555c"/><ellipse cx="8.500" cy="22" rx="5" ry="4.200" transform="rotate(25 8.500 22)" fill="#1a1a1e"/><ellipse cx="8" cy="23" rx="3.600" ry="2.800" transform="rotate(25 8 23)" fill="#e89a8a"/><ellipse cx="26" cy="22" rx="4.600" ry="4.800" transform="rotate(-20 26 22)" fill="#1a1a1e"/><ellipse cx="26.500" cy="23" rx="3.200" ry="3.300" fill="#f0a090"/><path d="M5 9L9 6" stroke="#aaa" stroke-width="1"/></svg>
<svg style="left:209.5px;top:115px" width="32" height="32" viewBox="0 0 32 32"><circle cx="16" cy="16" r="15.300" fill="url(#gCop)" stroke="#7a1c10" stroke-width="1.200"/><path d="M11 26L16 8L21 26" fill="none" stroke="#fff" stroke-width="3.500" opacity=".55"/><path d="M6.500 7L25.500 25M25.500 7L6.500 25" stroke="#e01020" stroke-width="2.600"/></svg>
<svg style="left:249.5px;top:115px" width="32" height="32" viewBox="0 0 32 32"><rect x="7" y="2" width="17" height="11" fill="#fff" stroke="#c8c8c8" stroke-width=".8"/><path d="M3 12H29L31.500 16V25H.500V16Z" fill="#cfcfcf" stroke="#8a8a8a" stroke-width=".8"/><path d="M2 12.500H30L31 14.500H1Z" fill="#a84a18"/><rect x="5" y="20" width="22" height="9" fill="#f4f4f4" stroke="#888" stroke-width=".8"/><path d="M6 23H26M6 26H26" stroke="#9a9a9a" stroke-width="1"/><rect x=".500" y="16" width="31" height="3" fill="#ececec"/></svg>
<svg style="left:288px;top:115px" width="32" height="32" viewBox="0 0 32 32"><path d="M16 3C16.500 12 17 14.500 29 16.500C17 18.500 16.500 21 16 30C15.500 21 15 18.500 2 16.500C15 14.500 15.500 12 16 3Z" fill="#000"/><path d="M32 0V11L28.500 7.500L23 13L19.500 9.500L25 4L21.500 0Z" fill="#f04010"/><path d="M0 32V21L3.500 24.500L9 19L12.500 22.500L7 28L10.500 32Z" fill="#f04010"/></svg>
<svg style="left:326.5px;top:115px" width="32" height="32" viewBox="0 0 32 32"><path d="M17 3.500H26L31.500 11.500H22Z" fill="#fff" stroke="#c06820" stroke-width="1.800" stroke-linejoin="round"/><path d="M17 3.500C9 4 6 9 6.500 14H.500L10.500 29.500L21.500 14H15.500C15.500 11 18 10 22 11.500Z" fill="url(#gOrV)" stroke="#d06010" stroke-width=".6"/></svg>
<svg style="left:366px;top:114.5px" width="32" height="32" viewBox="0 0 32 32"><g transform="rotate(0 16 16)" fill="#000"><path d="M15.500 15.500V0L11 7.500L3.500 0L0 3.500L7.500 11L0 15.500Z"/></g><g transform="rotate(90 16 16)" fill="#000"><path d="M15.500 15.500V0L11 7.500L3.500 0L0 3.500L7.500 11L0 15.500Z"/></g><g transform="rotate(180 16 16)" fill="#000"><path d="M15.500 15.500V0L11 7.500L3.500 0L0 3.500L7.500 11L0 15.500Z"/></g><g transform="rotate(270 16 16)" fill="#000"><path d="M15.500 15.500V0L11 7.500L3.500 0L0 3.500L7.500 11L0 15.500Z"/></g></svg>
<svg style="left:405px;top:115px" width="32" height="32" viewBox="0 0 32 32"><path d="M1 21H14L19 28H6Z" fill="#fff" stroke="#c06820" stroke-width="1.800" stroke-linejoin="round"/><path d="M19 28C25 27 27 20 26.500 14.500H32L22.500 1.500L13 14.500H18C18.500 20 17 22 14 21Z" fill="url(#gOrV)" stroke="#d06010" stroke-width=".6"/></svg>
<svg style="left:443px;top:115px" width="32" height="32" viewBox="0 0 32 32"><rect x="1.500" y="10.500" width="5" height="11.500" fill="#f07a10" stroke="#000" stroke-width="1.800"/><path d="M10 11H18V5.500L30.500 16.500L18 27.500V22H10Z" fill="url(#gYA)" stroke="#000" stroke-width="2" stroke-linejoin="miter"/></svg>
<svg style="left:483px;top:116px" width="32" height="31" viewBox="0 0 32 31"><rect x=".500" y=".500" width="31" height="29.500" rx="2" fill="#fff" stroke="#f4a070" stroke-width="1.200"/><path d="M.500 7V2.500C.500 1.500 1.500 .500 2.500 .500H29.500C30.500 .500 31.500 1.500 31.500 2.500V7Z" fill="#f0601a"/><rect x="1" y="7" width="7.500" height="22.500" fill="#fbc4a0"/><path d="M8.500 7V30M16 1V30M24 1V30M1 14.500H31M1 22H31" stroke="#f4a878" stroke-width="1"/></svg>
<svg style="left:522px;top:115px" width="32" height="32" viewBox="0 0 32 32"><path d="M1 6C12 3 24 6 31 9" fill="none" stroke="#111" stroke-width="1.800"/><path d="M1 21C10 20 22 17 31 16" fill="none" stroke="#bbb" stroke-width="1.400"/><path d="M4 27H24" stroke="#111" stroke-width="1.600"/><ellipse cx="15" cy="14" rx="9" ry="4.500" transform="rotate(15 15 14)" fill="none" stroke="#555" stroke-width="1.200"/><path d="M1 18C6 20 10 17 13 14" stroke="#e0a030" stroke-width="1.300" fill="none"/><circle cx="11" cy="5" r="2.600" fill="#e84820"/><circle cx="12.500" cy="14.500" r="2.700" fill="#1c3c8c"/><circle cx="21" cy="13" r="2.200" fill="#c8a070"/><circle cx="27" cy="25.500" r="3.400" fill="#a870b8"/></svg>
<svg style="left:560.5px;top:114.5px" width="32" height="32" viewBox="0 0 32 32"><g transform="rotate(0 16 16)" fill="#8a8a8a"><path d="M15.500 15.500V0L11 7.500L3.500 0L0 3.500L7.500 11L0 15.500Z"/></g><g transform="rotate(90 16 16)" fill="#000"><path d="M15.500 15.500V0L11 7.500L3.500 0L0 3.500L7.500 11L0 15.500Z"/></g><g transform="rotate(180 16 16)" fill="#000"><path d="M15.500 15.500V0L11 7.500L3.500 0L0 3.500L7.500 11L0 15.500Z"/></g><g transform="rotate(270 16 16)" fill="#000"><path d="M15.500 15.500V0L11 7.500L3.500 0L0 3.500L7.500 11L0 15.500Z"/></g></svg>
<svg style="left:600px;top:115px" width="32" height="32" viewBox="0 0 32 32"><g stroke="#e8d0c0" stroke-width=".6"><path d="M4 5V28M8 5V28M12 5V28M0 10H14M0 15H14M18 20H32M18 25H32M22 18V30M27 18V30"/></g><text x="9.500" y="14.500" font-family="Liberation Sans,sans-serif" font-weight="bold" font-size="18.500" fill="#f0601a" stroke="#f0601a" stroke-width=".7" textLength="22.500" lengthAdjust="spacingAndGlyphs">EQ</text><text x="0" y="31.500" font-family="Liberation Sans,sans-serif" font-weight="bold" font-size="18.500" fill="#f0601a" stroke="#f0601a" stroke-width=".7" textLength="22.500" lengthAdjust="spacingAndGlyphs">AZ</text><path d="M1 1L31 31" stroke="#000" stroke-width="1.500"/></svg>
<div class="r" style="left:638.500px;top:115px;width:1px;height:33px;background:#a8a8a8"></div>
<div class="r" style="left:667.500px;top:113px;width:38.500px;height:36px;background:#cde0f7;border:1px solid #a4ccf2"></div>
<svg style="left:670.5px;top:115px" width="32" height="32" viewBox="0 0 32 32"><path d="M21.500 9.500A11 11 0 1 0 27.500 19" fill="none" stroke="#e8601c" stroke-width="3.800"/><path d="M16 18L28 6" stroke="#e8601c" stroke-width="3.400"/><path d="M20 1.500H32V13.500Z" fill="#e8601c"/></svg>
<svg style="left:709.5px;top:115px" width="32" height="34" viewBox="0 0 32 34"><rect x="2.500" y="7" width="23" height="16.500" fill="none" stroke="#3c3c3c" stroke-width="2.600" stroke-dasharray="5 3.500"/><path d="M20 17.500L30 27.500L26 27.500L28.500 32L26.500 33L24 28.500L20.500 31.500Z" fill="#d8d8d8" stroke="#333" stroke-width="1" transform="rotate(-12 22 22)"/></svg>
<svg style="left:749px;top:115px" width="32" height="32" viewBox="0 0 32 32"><path d="M2 1.500V31H28Z" fill="#dcdcdc" stroke="#8e8e8e" stroke-width="2.400" stroke-linejoin="round"/><path d="M7 14V26H17.500Z" fill="#fff" stroke="#9a9a9a" stroke-width="1.200"/></svg>
<div class="r" style="left:786.500px;top:115px;width:1px;height:33px;background:#a8a8a8"></div>
<svg style="left:818px;top:115px" width="32" height="32" viewBox="0 0 32 32"><rect x=".5" y=".5" width="31" height="31" rx="3" fill="#ff9a0c" stroke="#ffb64a" stroke-width="1"/><text x="16" y="25" text-anchor="middle" font-family="Liberation Sans,sans-serif" font-weight="bold" font-size="25" fill="#0a0a0a" stroke="#0a0a0a" stroke-width="1.300" textLength="26" lengthAdjust="spacingAndGlyphs">W</text></svg>
<svg style="left:857px;top:115px" width="32" height="32" viewBox="0 0 32 32"><rect x=".5" y=".5" width="31" height="31" rx="3" fill="#ff9a0c" stroke="#ffb64a" stroke-width="1"/><text x="16" y="25" text-anchor="middle" font-family="Liberation Sans,sans-serif" font-weight="bold" font-size="25" fill="#0a0a0a" stroke="#0a0a0a" stroke-width="1.300">N</text></svg>
<svg style="left:896px;top:115px" width="32" height="32" viewBox="0 0 32 32"><rect x=".5" y=".5" width="31" height="31" rx="3" fill="#ff9a0c" stroke="#ffb64a" stroke-width="1"/><text x="16" y="25" text-anchor="middle" font-family="Liberation Sans,sans-serif" font-weight="bold" font-size="25" fill="#0a0a0a" stroke="#0a0a0a" stroke-width="1.300">S</text></svg>
<svg style="left:935px;top:115px" width="32" height="32" viewBox="0 0 32 32"><rect x=".5" y=".5" width="31" height="31" rx="3" fill="#ff9a0c" stroke="#ffb64a" stroke-width="1"/><text x="16" y="25" text-anchor="middle" font-family="Liberation Sans,sans-serif" font-weight="bold" font-size="25" fill="#0a0a0a" stroke="#0a0a0a" stroke-width="1.300">E</text></svg>
<svg style="left:974px;top:115px" width="32" height="32" viewBox="0 0 32 32"><rect x=".5" y=".5" width="31" height="31" rx="3" fill="#ff9a0c" stroke="#ffb64a" stroke-width="1"/><text x="16" y="25" text-anchor="middle" font-family="Liberation Sans,sans-serif" font-weight="bold" font-size="25" fill="#0a0a0a" stroke="#0a0a0a" stroke-width="1.300">Z</text></svg>
<svg style="left:1013px;top:115px" width="32" height="32" viewBox="0 0 32 32"><g fill="none" stroke="#a8a8a8" stroke-width=".9"><circle cx="16" cy="16" r="14.500"/><ellipse cx="16" cy="16" rx="7" ry="14.500"/><path d="M16 1.500V30.500M1.500 16H30.500M3.500 8.500H28.500M3.500 23.500H28.500"/></g><text x="16" y="24" text-anchor="middle" font-family="Liberation Sans,sans-serif" font-weight="bold" font-size="21" fill="#f07814" stroke="#5a2800" stroke-width="1.200" textLength="27" lengthAdjust="spacingAndGlyphs">TU</text></svg>
<svg style="left:1052px;top:115px" width="32" height="32" viewBox="0 0 32 32"><circle cx="16" cy="16" r="13.600" fill="#fff" stroke="#111" stroke-width="2.400"/><path d="M16 4.500V6.500M16 25.500V27.500M4.500 16H6.500M25.500 16H27.500" stroke="#111" stroke-width="1.500"/><path d="M16 7V17L23.500 22" fill="none" stroke="#f07a3c" stroke-width="2"/><path d="M23 22.500A13.500 13.500 0 0 0 29.500 17" fill="none" stroke="#fff" stroke-width="3"/><path d="M30 25V30H25Z" fill="#f07a3c"/><path d="M26 21L29.500 27.500" stroke="#f07a3c" stroke-width="1.800"/></svg>
<div class="r " style="left:10px;top:151px;width:1349px;height:668px;background:#000;border:2px solid #707070;border-right:1px solid #e8e8e8;border-bottom:2px solid #f4f4f4;"></div>
<svg style="left:0;top:0" width="1920" height="1080" viewBox="0 0 1920 1080"><defs><clipPath id="skyc"><rect x="12" y="153" width="1346" height="664"/></clipPath></defs><g clip-path="url(#skyc)" shape-rendering="crispEdges"><rect x="448" y="254" width="1" height="1" fill="rgb(90,90,90)"/><rect x="1116" y="216" width="1.4" height="1.4" fill="rgb(90,90,90)"/><rect x="301" y="211" width="1" height="1" fill="rgb(230,230,230)"/><rect x="336" y="519" width="2" height="2" fill="rgb(90,90,90)"/><rect x="772" y="781" width="1.4" height="1.4" fill="rgb(90,90,90)"/><rect x="799" y="187" width="1" height="1" fill="rgb(150,150,150)"/><rect x="761" y="242" width="1" height="1" fill="rgb(230,230,230)"/><rect x="739" y="532" width="1" height="1" fill="rgb(130,130,130)"/><rect x="794" y="577" width="1" height="1" fill="rgb(200,200,200)"/><rect x="749" y="196" width="1.4" height="1.4" fill="rgb(90,90,90)"/><rect x="290" y="604" width="2" height="2" fill="rgb(230,230,230)"/><rect x="435" y="542" width="1" height="1" fill="rgb(255,255,255)"/><rect x="416" y="680" width="1" height="1" fill="rgb(150,150,150)"/><rect x="784" y="502" width="1.4" height="1.4" fill="rgb(200,200,200)"/><rect x="616" y="557" width="1" height="1" fill="rgb(110,110,110)"/><rect x="701" y="263" width="1" height="1" fill="rgb(200,200,200)"/><rect x="1266" y="433" width="2" height="2" fill="rgb(110,110,110)"/><rect x="762" y="676" width="1" height="1" fill="rgb(200,200,200)"/><rect x="947" y="547" width="1" height="1" fill="rgb(255,255,255)"/><rect x="1141" y="779" width="1.4" height="1.4" fill="rgb(255,255,255)"/><rect x="905" y="194" width="1.4" height="1.4" fill="rgb(170,170,170)"/><rect x="789" y="605" width="1" height="1" fill="rgb(255,255,255)"/><rect x="975" y="741" width="1" height="1" fill="rgb(200,200,200)"/><rect x="1276" y="389" width="1" height="1" fill="rgb(110,110,110)"/><rect x="92" y="663" width="1.4" height="1.4" fill="rgb(130,130,130)"/><rect x="346" y="413" width="1" height="1" fill="rgb(255,255,255)"/><rect x="236" y="420" width="1" height="1" fill="rgb(170,170,170)"/><rect x="1113" y="726" width="1.4" height="1.4" fill="rgb(170,170,170)"/><rect x="571" y="392" width="1" height="1" fill="rgb(230,230,230)"/><rect x="216" y="271" width="1.4" height="1.4" fill="rgb(150,150,150)"/><rect x="326" y="475" width="1" height="1" fill="rgb(130,130,130)"/><rect x="392" y="250" width="1.4" height="1.4" fill="rgb(200,200,200)"/><rect x="774" y="785" width="1" height="1" fill="rgb(90,90,90)"/><rect x="1221" y="670" width="1" height="1" fill="rgb(230,230,230)"/><rect x="549" y="223" width="1" height="1" fill="rgb(230,230,230)"/><rect x="269" y="806" width="1" height="1" fill="rgb(255,255,255)"/><rect x="161" y="552" width="1" height="1" fill="rgb(110,110,110)"/><rect x="774" y="509" width="1.4" height="1.4" fill="rgb(200,200,200)"/><rect x="47" y="733" width="1" height="1" fill="rgb(230,230,230)"/><rect x="865" y="787" width="1" height="1" fill="rgb(200,200,200)"/><rect x="178" y="716" width="1" height="1" fill="rgb(255,255,255)"/><rect x="663" y="211" width="1.4" height="1.4" fill="rgb(110,110,110)"/><rect x="473" y="329" width="1.4" height="1.4" fill="rgb(130,130,130)"/><rect x="44" y="784" width="1" height="1" fill="rgb(200,200,200)"/><rect x="940" y="759" width="1.4" height="1.4" fill="rgb(170,170,170)"/><rect x="1172" y="615" width="1.4" height="1.4" fill="rgb(170,170,170)"/><rect x="505" y="265" width="1.4" height="1.4" fill="rgb(150,150,150)"/><rect x="740" y="487" width="1.4" height="1.4" fill="rgb(150,150,150)"/><rect x="1103" y="806" width="2" height="2" fill="rgb(150,150,150)"/><rect x="334" y="419" width="1" height="1" fill="rgb(150,150,150)"/><rect x="708" y="389" width="1" height="1" fill="rgb(90,90,90)"/><rect x="1074" y="467" width="1.4" height="1.4" fill="rgb(150,150,150)"/><rect x="826" y="382" width="1" height="1" fill="rgb(200,200,200)"/><rect x="121" y="222" width="1" height="1" fill="rgb(255,255,255)"/><rect x="467" y="474" width="1" height="1" fill="rgb(90,90,90)"/><rect x="1234" y="382" width="2" height="2" fill="rgb(110,110,110)"/><rect x="900" y="756" width="1" height="1" fill="rgb(150,150,150)"/><rect x="1207" y="441" width="1" height="1" fill="rgb(200,200,200)"/><rect x="1089" y="797" width="1" height="1" fill="rgb(230,230,230)"/><rect x="552" y="781" width="1" height="1" fill="rgb(130,130,130)"/><rect x="1347" y="172" width="2" height="2" fill="rgb(255,255,255)"/><rect x="894" y="559" width="1.4" height="1.4" fill="rgb(255,255,255)"/><rect x="1272" y="257" width="1" height="1" fill="rgb(130,130,130)"/><rect x="32" y="797" width="1.4" height="1.4" fill="rgb(110,110,110)"/><rect x="1020" y="246" width="2" height="2" fill="rgb(150,150,150)"/><rect x="1187" y="173" width="1" height="1" fill="rgb(150,150,150)"/><rect x="686" y="660" width="1" height="1" fill="rgb(200,200,200)"/><rect x="744" y="706" width="1.4" height="1.4" fill="rgb(90,90,90)"/><rect x="488" y="457" width="2" height="2" fill="rgb(230,230,230)"/><rect x="1245" y="486" width="1.4" height="1.4" fill="rgb(130,130,130)"/><rect x="699" y="732" width="1.4" height="1.4" fill="rgb(130,130,130)"/><rect x="18" y="683" width="1" height="1" fill="rgb(130,130,130)"/><rect x="649" y="634" width="1" height="1" fill="rgb(90,90,90)"/><rect x="929" y="505" width="2" height="2" fill="rgb(255,255,255)"/><rect x="1056" y="739" width="1" height="1" fill="rgb(90,90,90)"/><rect x="270" y="182" width="1.4" height="1.4" fill="rgb(110,110,110)"/><rect x="620" y="172" width="1" height="1" fill="rgb(110,110,110)"/><rect x="450" y="798" width="1.4" height="1.4" fill="rgb(150,150,150)"/><rect x="385" y="490" width="1.4" height="1.4" fill="rgb(255,255,255)"/><rect x="1277" y="617" width="1.4" height="1.4" fill="rgb(170,170,170)"/><rect x="1212" y="288" width="1" height="1" fill="rgb(255,255,255)"/><rect x="573" y="414" width="1" height="1" fill="rgb(200,200,200)"/><rect x="914" y="438" width="1.4" height="1.4" fill="rgb(150,150,150)"/><rect x="420" y="235" width="1.4" height="1.4" fill="rgb(130,130,130)"/><rect x="877" y="396" width="1" height="1" fill="rgb(170,170,170)"/><rect x="1312" y="299" width="1" height="1" fill="rgb(110,110,110)"/><rect x="1201" y="262" width="1" height="1" fill="rgb(150,150,150)"/><rect x="962" y="812" width="1" height="1" fill="rgb(230,230,230)"/><rect x="579" y="390" width="1.4" height="1.4" fill="rgb(110,110,110)"/><rect x="504" y="378" width="1" height="1" fill="rgb(255,255,255)"/><rect x="957" y="408" width="1.4" height="1.4" fill="rgb(170,170,170)"/><rect x="1303" y="229" width="1" height="1" fill="rgb(150,150,150)"/><rect x="126" y="334" width="1" height="1" fill="rgb(130,130,130)"/><rect x="1028" y="697" width="1" height="1" fill="rgb(170,170,170)"/><rect x="214" y="762" width="1.4" height="1.4" fill="rgb(255,255,255)"/><rect x="452" y="339" width="1" height="1" fill="rgb(130,130,130)"/><rect x="1215" y="332" width="1.4" height="1.4" fill="rgb(90,90,90)"/><rect x="132" y="326" width="1" height="1" fill="rgb(150,150,150)"/><rect x="368" y="235" width="1" height="1" fill="rgb(90,90,90)"/><rect x="1348" y="431" width="1.4" height="1.4" fill="rgb(170,170,170)"/><rect x="187" y="503" width="1" height="1" fill="rgb(150,150,150)"/><rect x="1315" y="327" width="1" height="1" fill="rgb(130,130,130)"/><rect x="1265" y="570" width="1" height="1" fill="rgb(150,150,150)"/><rect x="612" y="599" width="1" height="1" fill="rgb(170,170,170)"/><rect x="1092" y="812" width="1" height="1" fill="rgb(90,90,90)"/><rect x="38" y="489" width="1.4" height="1.4" fill="rgb(150,150,150)"/><rect x="651" y="773" width="1.4" height="1.4" fill="rgb(110,110,110)"/><rect x="1113" y="440" width="1.4" height="1.4" fill="rgb(255,255,255)"/><rect x="1134" y="414" width="1.4" height="1.4" fill="rgb(170,170,170)"/><rect x="302" y="306" width="2" height="2" fill="rgb(150,150,150)"/><rect x="1197" y="636" width="1" height="1" fill="rgb(130,130,130)"/><rect x="1342" y="804" width="1" height="1" fill="rgb(130,130,130)"/><rect x="108" y="644" width="1" height="1" fill="rgb(170,170,170)"/><rect x="232" y="210" width="2" height="2" fill="rgb(230,230,230)"/><rect x="692" y="797" width="1.4" height="1.4" fill="rgb(150,150,150)"/><rect x="407" y="458" width="1" height="1" fill="rgb(130,130,130)"/><rect x="612" y="328" width="1.4" height="1.4" fill="rgb(200,200,200)"/><rect x="448" y="177" width="1" height="1" fill="rgb(170,170,170)"/><rect x="492" y="155" width="1" height="1" fill="rgb(230,230,230)"/><rect x="650" y="487" width="1" height="1" fill="rgb(150,150,150)"/><rect x="691" y="157" width="2" height="2" fill="rgb(170,170,170)"/><rect x="134" y="418" width="1" height="1" fill="rgb(90,90,90)"/><rect x="43" y="355" width="1" height="1" fill="rgb(150,150,150)"/><rect x="799" y="504" width="1.4" height="1.4" fill="rgb(130,130,130)"/><rect x="1212" y="673" width="2" height="2" fill="rgb(230,230,230)"/><rect x="451" y="806" width="1" height="1" fill="rgb(130,130,130)"/><rect x="986" y="580" width="2" height="2" fill="rgb(90,90,90)"/><rect x="1135" y="744" width="1.4" height="1.4" fill="rgb(230,230,230)"/><rect x="955" y="489" width="2" height="2" fill="rgb(90,90,90)"/><rect x="935" y="682" width="1" height="1" fill="rgb(150,150,150)"/><rect x="55" y="242" width="1" height="1" fill="rgb(200,200,200)"/><rect x="519" y="453" width="1.4" height="1.4" fill="rgb(90,90,90)"/><rect x="38" y="506" width="1" height="1" fill="rgb(150,150,150)"/><rect x="367" y="456" width="1.4" height="1.4" fill="rgb(110,110,110)"/><rect x="1265" y="748" width="1.4" height="1.4" fill="rgb(110,110,110)"/><rect x="719" y="648" width="1" height="1" fill="rgb(255,255,255)"/><rect x="1100" y="714" width="1.4" height="1.4" fill="rgb(150,150,150)"/><rect x="1029" y="307" width="1" height="1" fill="rgb(255,255,255)"/><rect x="1149" y="205" width="2" height="2" fill="rgb(170,170,170)"/><rect x="76" y="573" width="1" height="1" fill="rgb(150,150,150)"/><rect x="818" y="374" width="1.4" height="1.4" fill="rgb(170,170,170)"/><rect x="776" y="162" width="1" height="1" fill="rgb(90,90,90)"/><rect x="374" y="599" width="1.4" height="1.4" fill="rgb(150,150,150)"/><rect x="671" y="623" width="1" height="1" fill="rgb(170,170,170)"/><rect x="639" y="662" width="1" height="1" fill="rgb(150,150,150)"/><rect x="1327" y="774" width="1" height="1" fill="rgb(90,90,90)"/><rect x="629" y="697" width="1" height="1" fill="rgb(255,255,255)"/><rect x="533" y="761" width="1" height="1" fill="rgb(150,150,150)"/><rect x="794" y="248" width="1" height="1" fill="rgb(170,170,170)"/><rect x="191" y="697" width="1" height="1" fill="rgb(170,170,170)"/><rect x="958" y="307" width="1" height="1" fill="rgb(255,255,255)"/><rect x="46" y="156" width="1.4" height="1.4" fill="rgb(255,255,255)"/><rect x="618" y="354" width="1" height="1" fill="rgb(130,130,130)"/><rect x="475" y="363" width="1" height="1" fill="rgb(200,200,200)"/><rect x="449" y="378" width="1" height="1" fill="rgb(230,230,230)"/><rect x="1275" y="284" width="1.4" height="1.4" fill="rgb(90,90,90)"/><rect x="402" y="400" width="1" height="1" fill="rgb(230,230,230)"/><rect x="1354" y="544" width="1" height="1" fill="rgb(200,200,200)"/><rect x="1028" y="720" width="1" height="1" fill="rgb(170,170,170)"/><rect x="82" y="592" width="1" height="1" fill="rgb(130,130,130)"/><rect x="1317" y="443" width="1" height="1" fill="rgb(200,200,200)"/><rect x="1051" y="674" width="1" height="1" fill="rgb(230,230,230)"/><rect x="1103" y="572" width="1.4" height="1.4" fill="rgb(150,150,150)"/><rect x="121" y="772" width="1" height="1" fill="rgb(230,230,230)"/><rect x="839" y="246" width="1" height="1" fill="rgb(170,170,170)"/><rect x="79" y="768" width="1" height="1" fill="rgb(130,130,130)"/><rect x="647" y="382" width="1" height="1" fill="rgb(170,170,170)"/><rect x="1006" y="800" width="1" height="1" fill="rgb(170,170,170)"/><rect x="894" y="353" width="1" height="1" fill="rgb(230,230,230)"/><rect x="238" y="261" width="1.4" height="1.4" fill="rgb(150,150,150)"/><rect x="1230" y="483" width="1" height="1" fill="rgb(150,150,150)"/><rect x="1230" y="814" width="1" height="1" fill="rgb(255,255,255)"/><rect x="200" y="281" width="1" height="1" fill="rgb(110,110,110)"/><rect x="472" y="214" width="1" height="1" fill="rgb(150,150,150)"/><rect x="360" y="531" width="1.4" height="1.4" fill="rgb(90,90,90)"/><rect x="1182" y="407" width="1" height="1" fill="rgb(150,150,150)"/><rect x="376" y="652" width="1" height="1" fill="rgb(255,255,255)"/><rect x="784" y="392" width="1" height="1" fill="rgb(150,150,150)"/><rect x="377" y="318" width="1.4" height="1.4" fill="rgb(230,230,230)"/><rect x="612" y="786" width="1" height="1" fill="rgb(90,90,90)"/><rect x="56" y="624" width="1.4" height="1.4" fill="rgb(255,255,255)"/><rect x="671" y="202" width="1" height="1" fill="rgb(255,255,255)"/><rect x="347" y="226" width="1" height="1" fill="rgb(130,130,130)"/><rect x="715" y="606" width="1" height="1" fill="rgb(255,255,255)"/><rect x="754" y="180" width="1" height="1" fill="rgb(130,130,130)"/><rect x="778" y="179" width="1" height="1" fill="rgb(170,170,170)"/><rect x="854" y="504" width="1.4" height="1.4" fill="rgb(230,230,230)"/><rect x="1039" y="220" width="1.4" height="1.4" fill="rgb(170,170,170)"/><rect x="1280" y="281" width="1" height="1" fill="rgb(170,170,170)"/><rect x="1075" y="155" width="1" height="1" fill="rgb(170,170,170)"/><rect x="387" y="363" width="1" height="1" fill="rgb(150,150,150)"/><rect x="720" y="516" width="1" height="1" fill="rgb(90,90,90)"/><rect x="959" y="357" width="1" height="1" fill="rgb(90,90,90)"/><rect x="682" y="600" width="1" height="1" fill="rgb(230,230,230)"/><rect x="358" y="596" width="1" height="1" fill="rgb(200,200,200)"/><rect x="675" y="615" width="1" height="1" fill="rgb(230,230,230)"/><rect x="930" y="285" width="1.4" height="1.4" fill="rgb(170,170,170)"/><rect x="1148" y="199" width="1" height="1" fill="rgb(255,255,255)"/><rect x="432" y="697" width="1" height="1" fill="rgb(150,150,150)"/><rect x="310" y="657" width="1" height="1" fill="rgb(170,170,170)"/><rect x="1291" y="482" width="1" height="1" fill="rgb(130,130,130)"/><rect x="664" y="757" width="1.4" height="1.4" fill="rgb(90,90,90)"/><rect x="210" y="414" width="1" height="1" fill="rgb(150,150,150)"/><rect x="1321" y="248" width="1.4" height="1.4" fill="rgb(90,90,90)"/><rect x="94" y="414" width="1.4" height="1.4" fill="rgb(200,200,200)"/><rect x="165" y="207" width="1" height="1" fill="rgb(130,130,130)"/><rect x="269" y="586" width="1" height="1" fill="rgb(255,255,255)"/><rect x="432" y="634" width="1" height="1" fill="rgb(200,200,200)"/><rect x="607" y="226" width="1" height="1" fill="rgb(110,110,110)"/><rect x="121" y="432" width="1.4" height="1.4" fill="rgb(110,110,110)"/><rect x="1308" y="291" width="2" height="2" fill="rgb(200,200,200)"/><rect x="1116" y="698" width="1" height="1" fill="rgb(230,230,230)"/><rect x="79" y="467" width="1.4" height="1.4" fill="rgb(200,200,200)"/><rect x="1248" y="282" width="1.4" height="1.4" fill="rgb(200,200,200)"/><rect x="1218" y="174" width="1" height="1" fill="rgb(230,230,230)"/><rect x="1103" y="662" width="1" height="1" fill="rgb(90,90,90)"/><rect x="60" y="195" width="1" height="1" fill="rgb(90,90,90)"/><rect x="275" y="196" width="1" height="1" fill="rgb(200,200,200)"/><rect x="379" y="788" width="1" height="1" fill="rgb(90,90,90)"/><rect x="1015" y="611" width="1" height="1" fill="rgb(170,170,170)"/><rect x="18" y="654" width="1" height="1" fill="rgb(110,110,110)"/><rect x="1122" y="225" width="2" height="2" fill="rgb(255,255,255)"/><rect x="532" y="320" width="2" height="2" fill="rgb(230,230,230)"/><rect x="676" y="768" width="1" height="1" fill="rgb(130,130,130)"/><rect x="1091" y="643" width="1.4" height="1.4" fill="rgb(130,130,130)"/><rect x="330" y="724" width="1" height="1" fill="rgb(255,255,255)"/><rect x="1066" y="548" width="1" height="1" fill="rgb(150,150,150)"/><rect x="1024" y="318" width="1.4" height="1.4" fill="rgb(110,110,110)"/><rect x="58" y="520" width="1" height="1" fill="rgb(200,200,200)"/><rect x="1329" y="739" width="1" height="1" fill="rgb(110,110,110)"/><rect x="852" y="292" width="1" height="1" fill="rgb(230,230,230)"/><rect x="1340" y="798" width="1" height="1" fill="rgb(130,130,130)"/><rect x="192" y="459" width="1.4" height="1.4" fill="rgb(150,150,150)"/><rect x="736" y="666" width="2" height="2" fill="rgb(110,110,110)"/><rect x="1142" y="348" width="1" height="1" fill="rgb(170,170,170)"/><rect x="354" y="326" width="1" height="1" fill="rgb(255,255,255)"/><rect x="262" y="310" width="1.4" height="1.4" fill="rgb(170,170,170)"/><rect x="266" y="197" width="1" height="1" fill="rgb(170,170,170)"/><rect x="694" y="307" width="1.4" height="1.4" fill="rgb(110,110,110)"/><rect x="636" y="179" width="1" height="1" fill="rgb(90,90,90)"/><rect x="1199" y="307" width="1" height="1" fill="rgb(255,255,255)"/><rect x="67" y="348" width="1" height="1" fill="rgb(110,110,110)"/><rect x="268" y="798" width="1" height="1" fill="rgb(150,150,150)"/><rect x="513" y="727" width="1.4" height="1.4" fill="rgb(255,255,255)"/><rect x="362" y="669" width="1" height="1" fill="rgb(90,90,90)"/><rect x="869" y="624" width="1" height="1" fill="rgb(200,200,200)"/><rect x="63" y="379" width="1" height="1" fill="rgb(90,90,90)"/><rect x="1356" y="179" width="2" height="2" fill="rgb(150,150,150)"/><rect x="28" y="371" width="1" height="1" fill="rgb(200,200,200)"/><rect x="847" y="206" width="2" height="2" fill="rgb(90,90,90)"/><rect x="679" y="474" width="1" height="1" fill="rgb(230,230,230)"/><rect x="1082" y="594" width="1.4" height="1.4" fill="rgb(130,130,130)"/><rect x="730" y="586" width="1.4" height="1.4" fill="rgb(230,230,230)"/><rect x="377" y="808" width="1" height="1" fill="rgb(170,170,170)"/><rect x="1293" y="361" width="1" height="1" fill="rgb(200,200,200)"/><rect x="572" y="726" width="1.4" height="1.4" fill="rgb(200,200,200)"/><rect x="278" y="636" width="1" height="1" fill="rgb(150,150,150)"/><rect x="596" y="258" width="2" height="2" fill="rgb(110,110,110)"/><rect x="135" y="537" width="1" height="1" fill="rgb(200,200,200)"/><rect x="1051" y="240" width="1.4" height="1.4" fill="rgb(90,90,90)"/><rect x="204" y="688" width="1" height="1" fill="rgb(230,230,230)"/><rect x="782" y="768" width="1" height="1" fill="rgb(130,130,130)"/><rect x="480" y="261" width="1" height="1" fill="rgb(130,130,130)"/><rect x="159" y="479" width="1" height="1" fill="rgb(150,150,150)"/><rect x="183" y="778" width="1" height="1" fill="rgb(255,255,255)"/><rect x="85" y="767" width="1" height="1" fill="rgb(230,230,230)"/><rect x="1227" y="565" width="1.4" height="1.4" fill="rgb(130,130,130)"/><rect x="1068" y="301" width="1.4" height="1.4" fill="rgb(230,230,230)"/><rect x="1150" y="703" width="1.4" height="1.4" fill="rgb(130,130,130)"/><rect x="306" y="419" width="1" height="1" fill="rgb(130,130,130)"/><rect x="495" y="253" width="1" height="1" fill="rgb(150,150,150)"/><rect x="1200" y="712" width="1.4" height="1.4" fill="rgb(90,90,90)"/><rect x="1139" y="232" width="1.4" height="1.4" fill="rgb(255,255,255)"/><rect x="1153" y="669" width="1" height="1" fill="rgb(230,230,230)"/><rect x="795" y="436" width="1" height="1" fill="rgb(200,200,200)"/><rect x="689" y="272" width="1.4" height="1.4" fill="rgb(90,90,90)"/><rect x="1337" y="462" width="2" height="2" fill="rgb(255,255,255)"/><rect x="844" y="696" width="2" height="2" fill="rgb(130,130,130)"/><rect x="649" y="225" width="1" height="1" fill="rgb(130,130,130)"/><rect x="591" y="215" width="1.4" height="1.4" fill="rgb(255,255,255)"/><rect x="698" y="181" width="1" height="1" fill="rgb(130,130,130)"/><rect x="1251" y="362" width="1" height="1" fill="rgb(110,110,110)"/><rect x="1023" y="746" width="1" height="1" fill="rgb(130,130,130)"/><rect x="1164" y="813" width="1" height="1" fill="rgb(110,110,110)"/><rect x="190" y="740" width="2" height="2" fill="rgb(170,170,170)"/><rect x="1243" y="263" width="1" height="1" fill="rgb(150,150,150)"/><rect x="1132" y="558" width="1" height="1" fill="rgb(170,170,170)"/><rect x="448" y="560" width="1" height="1" fill="rgb(255,255,255)"/><rect x="354" y="792" width="1" height="1" fill="rgb(255,255,255)"/><rect x="808" y="562" width="1" height="1" fill="rgb(150,150,150)"/><rect x="513" y="286" width="1" height="1" fill="rgb(230,230,230)"/><rect x="868" y="338" width="1" height="1" fill="rgb(200,200,200)"/><rect x="240" y="674" width="2" height="2" fill="rgb(110,110,110)"/><rect x="726" y="575" width="2" height="2" fill="rgb(200,200,200)"/><rect x="621" y="499" width="1" height="1" fill="rgb(110,110,110)"/><rect x="1347" y="571" width="1.4" height="1.4" fill="rgb(230,230,230)"/><rect x="1084" y="329" width="1.4" height="1.4" fill="rgb(200,200,200)"/><rect x="209" y="373" width="1" height="1" fill="rgb(110,110,110)"/><rect x="322" y="561" width="1" height="1" fill="rgb(90,90,90)"/><rect x="1114" y="322" width="1.4" height="1.4" fill="rgb(200,200,200)"/><rect x="15" y="176" width="1" height="1" fill="rgb(130,130,130)"/><rect x="840" y="440" width="1" height="1" fill="rgb(200,200,200)"/><rect x="190" y="304" width="1" height="1" fill="rgb(90,90,90)"/><rect x="86" y="529" width="1" height="1" fill="rgb(170,170,170)"/><rect x="716" y="508" width="1.4" height="1.4" fill="rgb(230,230,230)"/><rect x="417" y="243" width="1.4" height="1.4" fill="rgb(200,200,200)"/><rect x="1126" y="259" width="2" height="2" fill="rgb(90,90,90)"/><rect x="340" y="253" width="1" height="1" fill="rgb(110,110,110)"/><rect x="870" y="731" width="1" height="1" fill="rgb(170,170,170)"/><rect x="1103" y="794" width="1.4" height="1.4" fill="rgb(90,90,90)"/><rect x="1115" y="745" width="1.4" height="1.4" fill="rgb(255,255,255)"/><rect x="1272" y="640" width="1" height="1" fill="rgb(150,150,150)"/><rect x="1226" y="183" width="1" height="1" fill="rgb(90,90,90)"/><rect x="262" y="259" width="1" height="1" fill="rgb(110,110,110)"/><rect x="836" y="589" width="1" height="1" fill="rgb(150,150,150)"/><rect x="568" y="497" width="2" height="2" fill="rgb(230,230,230)"/><rect x="837" y="491" width="1" height="1" fill="rgb(110,110,110)"/><rect x="854" y="812" width="1.4" height="1.4" fill="rgb(255,255,255)"/><rect x="736" y="402" width="1.4" height="1.4" fill="rgb(230,230,230)"/><rect x="1238" y="207" width="1" height="1" fill="rgb(255,255,255)"/><rect x="316" y="224" width="1.4" height="1.4" fill="rgb(150,150,150)"/><rect x="65" y="376" width="1.4" height="1.4" fill="rgb(170,170,170)"/><rect x="84" y="575" width="1.4" height="1.4" fill="rgb(230,230,230)"/><rect x="1072" y="500" width="1" height="1" fill="rgb(170,170,170)"/><rect x="875" y="793" width="1" height="1" fill="rgb(150,150,150)"/><rect x="1195" y="164" width="1" height="1" fill="rgb(170,170,170)"/><rect x="1143" y="288" width="1.4" height="1.4" fill="rgb(130,130,130)"/><rect x="1242" y="281" width="1" height="1" fill="rgb(230,230,230)"/><rect x="820" y="405" width="1" height="1" fill="rgb(255,255,255)"/><rect x="1141" y="616" width="1" height="1" fill="rgb(90,90,90)"/><rect x="1297" y="309" width="2" height="2" fill="rgb(170,170,170)"/><rect x="298" y="566" width="1.4" height="1.4" fill="rgb(110,110,110)"/><rect x="1236" y="250" width="1" height="1" fill="rgb(90,90,90)"/><rect x="156" y="769" width="1" height="1" fill="rgb(200,200,200)"/><rect x="954" y="174" width="1.4" height="1.4" fill="rgb(130,130,130)"/><rect x="877" y="182" width="1.4" height="1.4" fill="rgb(110,110,110)"/><rect x="76" y="721" width="1" height="1" fill="rgb(200,200,200)"/><rect x="1111" y="697" width="2" height="2" fill="rgb(110,110,110)"/><rect x="1028" y="625" width="1" height="1" fill="rgb(230,230,230)"/><rect x="344" y="288" width="1" height="1" fill="rgb(90,90,90)"/><rect x="1288" y="757" width="2" height="2" fill="rgb(110,110,110)"/><rect x="1022" y="573" width="1" height="1" fill="rgb(255,255,255)"/><rect x="191" y="678" width="1" height="1" fill="rgb(150,150,150)"/><rect x="442" y="435" width="1" height="1" fill="rgb(90,90,90)"/><rect x="358" y="341" width="1" height="1" fill="rgb(200,200,200)"/><rect x="1046" y="553" width="2" height="2" fill="rgb(255,255,255)"/><rect x="399" y="648" width="1" height="1" fill="rgb(230,230,230)"/><rect x="599" y="666" width="1" height="1" fill="rgb(200,200,200)"/><rect x="959" y="510" width="1.4" height="1.4" fill="rgb(150,150,150)"/><rect x="1171" y="214" width="1" height="1" fill="rgb(170,170,170)"/><rect x="599" y="501" width="2" height="2" fill="rgb(170,170,170)"/><rect x="1021" y="190" width="1" height="1" fill="rgb(200,200,200)"/><rect x="142" y="614" width="1" height="1" fill="rgb(130,130,130)"/><rect x="809" y="788" width="1.4" height="1.4" fill="rgb(170,170,170)"/><rect x="1281" y="342" width="1.4" height="1.4" fill="rgb(150,150,150)"/><rect x="324" y="264" width="1" height="1" fill="rgb(110,110,110)"/><rect x="1071" y="616" width="1.4" height="1.4" fill="rgb(110,110,110)"/><rect x="452" y="217" width="1.4" height="1.4" fill="rgb(230,230,230)"/><rect x="129" y="742" width="1" height="1" fill="rgb(90,90,90)"/><rect x="290" y="328" width="1" height="1" fill="rgb(130,130,130)"/><rect x="1332" y="572" width="1" height="1" fill="rgb(255,255,255)"/><rect x="727" y="653" width="1" height="1" fill="rgb(90,90,90)"/><rect x="794" y="499" width="1.4" height="1.4" fill="rgb(255,255,255)"/><rect x="757" y="368" width="1" height="1" fill="rgb(255,255,255)"/><rect x="938" y="324" width="1" height="1" fill="rgb(150,150,150)"/><rect x="462" y="579" width="1.4" height="1.4" fill="rgb(150,150,150)"/><rect x="270" y="354" width="1.4" height="1.4" fill="rgb(130,130,130)"/><rect x="222" y="318" width="1.4" height="1.4" fill="rgb(200,200,200)"/><rect x="714" y="261" width="1" height="1" fill="rgb(200,200,200)"/><rect x="360" y="786" width="1" height="1" fill="rgb(110,110,110)"/><rect x="1305" y="221" width="1" height="1" fill="rgb(230,230,230)"/><rect x="1334" y="680" width="1" height="1" fill="rgb(170,170,170)"/><rect x="381" y="226" width="1" height="1" fill="rgb(110,110,110)"/><rect x="290" y="411" width="1" height="1" fill="rgb(90,90,90)"/><rect x="549" y="678" width="1.4" height="1.4" fill="rgb(150,150,150)"/><rect x="1330" y="350" width="1" height="1" fill="rgb(90,90,90)"/><rect x="358" y="643" width="1.4" height="1.4" fill="rgb(90,90,90)"/><rect x="338" y="719" width="2" height="2" fill="rgb(230,230,230)"/><rect x="320" y="632" width="1.4" height="1.4" fill="rgb(150,150,150)"/><rect x="257" y="236" width="1" height="1" fill="rgb(230,230,230)"/><rect x="362" y="618" width="1" height="1" fill="rgb(230,230,230)"/><rect x="1064" y="626" width="1" height="1" fill="rgb(130,130,130)"/><rect x="1154" y="474" width="1.4" height="1.4" fill="rgb(90,90,90)"/><rect x="1166" y="497" width="1.4" height="1.4" fill="rgb(130,130,130)"/><rect x="454" y="161" width="1" height="1" fill="rgb(255,255,255)"/><rect x="64" y="514" width="1.4" height="1.4" fill="rgb(130,130,130)"/><rect x="1063" y="777" width="1" height="1" fill="rgb(200,200,200)"/><rect x="1151" y="456" width="1.4" height="1.4" fill="rgb(150,150,150)"/><rect x="652" y="165" width="1.4" height="1.4" fill="rgb(200,200,200)"/><rect x="473" y="645" width="1" height="1" fill="rgb(255,255,255)"/><rect x="1343" y="276" width="1.4" height="1.4" fill="rgb(110,110,110)"/><rect x="1335" y="389" width="1" height="1" fill="rgb(90,90,90)"/><rect x="381" y="419" width="1" height="1" fill="rgb(90,90,90)"/><rect x="575" y="432" width="1.4" height="1.4" fill="rgb(200,200,200)"/><rect x="369" y="303" width="1.4" height="1.4" fill="rgb(230,230,230)"/><rect x="1318" y="812" width="1" height="1" fill="rgb(230,230,230)"/><rect x="298" y="240" width="2" height="2" fill="rgb(110,110,110)"/><rect x="1085" y="282" width="2" height="2" fill="rgb(150,150,150)"/><rect x="1307" y="388" width="1" height="1" fill="rgb(230,230,230)"/><rect x="1351" y="657" width="2" height="2" fill="rgb(130,130,130)"/><rect x="1133" y="389" width="1" height="1" fill="rgb(150,150,150)"/><rect x="959" y="609" width="1.4" height="1.4" fill="rgb(230,230,230)"/><rect x="263" y="156" width="1" height="1" fill="rgb(170,170,170)"/><rect x="342" y="354" width="1" height="1" fill="rgb(255,255,255)"/><rect x="588" y="576" width="1" height="1" fill="rgb(200,200,200)"/><rect x="1260" y="720" width="1" height="1" fill="rgb(90,90,90)"/><rect x="1125" y="754" width="1.4" height="1.4" fill="rgb(130,130,130)"/><rect x="1129" y="573" width="1.4" height="1.4" fill="rgb(90,90,90)"/><rect x="28" y="784" width="1" height="1" fill="rgb(170,170,170)"/><rect x="830" y="537" width="1" height="1" fill="rgb(150,150,150)"/><rect x="1056" y="383" width="1" height="1" fill="rgb(130,130,130)"/><rect x="1227" y="678" width="1.4" height="1.4" fill="rgb(130,130,130)"/><rect x="1210" y="557" width="1.4" height="1.4" fill="rgb(110,110,110)"/><rect x="1224" y="517" width="1" height="1" fill="rgb(170,170,170)"/><rect x="677" y="295" width="1.4" height="1.4" fill="rgb(110,110,110)"/><rect x="1140" y="598" width="1.4" height="1.4" fill="rgb(110,110,110)"/><rect x="172" y="431" width="1" height="1" fill="rgb(130,130,130)"/><rect x="675" y="193" width="1" height="1" fill="rgb(255,255,255)"/><rect x="954" y="317" width="1.4" height="1.4" fill="rgb(130,130,130)"/><rect x="818" y="640" width="2" height="2" fill="rgb(130,130,130)"/><rect x="444" y="615" width="1.4" height="1.4" fill="rgb(255,255,255)"/><rect x="412" y="462" width="1" height="1" fill="rgb(230,230,230)"/><rect x="1356" y="601" width="1.4" height="1.4" fill="rgb(130,130,130)"/><rect x="497" y="582" width="1.4" height="1.4" fill="rgb(90,90,90)"/><rect x="75" y="642" width="2" height="2" fill="rgb(200,200,200)"/><rect x="1331" y="492" width="2" height="2" fill="rgb(255,255,255)"/><rect x="1218" y="176" width="1.4" height="1.4" fill="rgb(230,230,230)"/><rect x="183" y="217" width="1" height="1" fill="rgb(200,200,200)"/><rect x="650" y="502" width="1" height="1" fill="rgb(150,150,150)"/><rect x="597" y="434" width="2" height="2" fill="rgb(90,90,90)"/><rect x="401" y="389" width="1" height="1" fill="rgb(255,255,255)"/><rect x="461" y="806" width="1" height="1" fill="rgb(200,200,200)"/><rect x="892" y="678" width="1" height="1" fill="rgb(200,200,200)"/><rect x="439" y="352" width="2" height="2" fill="rgb(110,110,110)"/><rect x="1351" y="418" width="1.4" height="1.4" fill="rgb(230,230,230)"/><rect x="784" y="418" width="1" height="1" fill="rgb(110,110,110)"/><rect x="75" y="698" width="1.4" height="1.4" fill="rgb(255,255,255)"/><rect x="1042" y="194" width="1.4" height="1.4" fill="rgb(230,230,230)"/><rect x="210" y="600" width="1" height="1" fill="rgb(110,110,110)"/><rect x="66" y="573" width="1" height="1" fill="rgb(130,130,130)"/><rect x="904" y="729" width="2" height="2" fill="rgb(230,230,230)"/><rect x="148" y="770" width="1" height="1" fill="rgb(90,90,90)"/><rect x="1184" y="246" width="1.4" height="1.4" fill="rgb(170,170,170)"/><rect x="967" y="725" width="1" height="1" fill="rgb(130,130,130)"/><rect x="59" y="167" width="1" height="1" fill="rgb(90,90,90)"/><rect x="775" y="180" width="2" height="2" fill="rgb(110,110,110)"/><rect x="1101" y="535" width="1" height="1" fill="rgb(230,230,230)"/><rect x="103" y="604" width="1" height="1" fill="rgb(130,130,130)"/><rect x="1047" y="517" width="1.4" height="1.4" fill="rgb(110,110,110)"/><rect x="647" y="747" width="1" height="1" fill="rgb(90,90,90)"/><rect x="19" y="607" width="2" height="2" fill="rgb(110,110,110)"/><rect x="131" y="730" width="1" height="1" fill="rgb(130,130,130)"/><rect x="37" y="630" width="1" height="1" fill="rgb(150,150,150)"/><rect x="998" y="278" width="1" height="1" fill="rgb(90,90,90)"/><rect x="1053" y="626" width="1.4" height="1.4" fill="rgb(130,130,130)"/><rect x="1033" y="348" width="1" height="1" fill="rgb(255,255,255)"/><rect x="912" y="743" width="1.4" height="1.4" fill="rgb(90,90,90)"/><rect x="56" y="194" width="1" height="1" fill="rgb(110,110,110)"/><rect x="431" y="637" width="2" height="2" fill="rgb(130,130,130)"/><rect x="1134" y="557" width="1" height="1" fill="rgb(200,200,200)"/><rect x="1287" y="636" width="1.4" height="1.4" fill="rgb(255,255,255)"/><rect x="237" y="794" width="1" height="1" fill="rgb(110,110,110)"/><rect x="1294" y="263" width="1" height="1" fill="rgb(230,230,230)"/><rect x="531" y="674" width="2" height="2" fill="rgb(170,170,170)"/><rect x="1027" y="375" width="1" height="1" fill="rgb(170,170,170)"/><rect x="848" y="585" width="2" height="2" fill="rgb(200,200,200)"/><rect x="827" y="801" width="1.4" height="1.4" fill="rgb(130,130,130)"/><rect x="1131" y="541" width="1" height="1" fill="rgb(150,150,150)"/><rect x="533" y="403" width="2" height="2" fill="rgb(150,150,150)"/><rect x="619" y="610" width="1" height="1" fill="rgb(200,200,200)"/><rect x="373" y="258" width="1" height="1" fill="rgb(90,90,90)"/><rect x="1132" y="691" width="1" height="1" fill="rgb(130,130,130)"/><rect x="1323" y="682" width="1" height="1" fill="rgb(255,255,255)"/><rect x="731" y="511" width="2" height="2" fill="rgb(255,255,255)"/><rect x="526" y="675" width="1" height="1" fill="rgb(150,150,150)"/><rect x="828" y="603" width="1.4" height="1.4" fill="rgb(255,255,255)"/><rect x="290" y="323" width="2" height="2" fill="rgb(90,90,90)"/><rect x="530" y="512" width="2" height="2" fill="rgb(200,200,200)"/><rect x="97" y="418" width="2" height="2" fill="rgb(170,170,170)"/><rect x="714" y="470" width="1" height="1" fill="rgb(150,150,150)"/><rect x="299" y="215" width="1" height="1" fill="rgb(170,170,170)"/><rect x="789" y="392" width="1" height="1" fill="rgb(130,130,130)"/><rect x="73" y="814" width="2" height="2" fill="rgb(200,200,200)"/><rect x="156" y="573" width="1" height="1" fill="rgb(110,110,110)"/><rect x="437" y="174" width="1.4" height="1.4" fill="rgb(170,170,170)"/><rect x="828" y="216" width="2" height="2" fill="rgb(150,150,150)"/><rect x="1176" y="476" width="1" height="1" fill="rgb(150,150,150)"/><rect x="1256" y="339" width="1" height="1" fill="rgb(110,110,110)"/><rect x="1043" y="696" width="1" height="1" fill="rgb(130,130,130)"/><rect x="1146" y="378" width="1" height="1" fill="rgb(130,130,130)"/><rect x="125" y="188" width="2" height="2" fill="rgb(200,200,200)"/><rect x="961" y="476" width="2" height="2" fill="rgb(110,110,110)"/><rect x="816" y="417" width="1.4" height="1.4" fill="rgb(110,110,110)"/><rect x="1301" y="324" width="1.4" height="1.4" fill="rgb(150,150,150)"/><rect x="134" y="764" width="1" height="1" fill="rgb(230,230,230)"/><rect x="615" y="260" width="1.4" height="1.4" fill="rgb(150,150,150)"/><rect x="311" y="180" width="1" height="1" fill="rgb(170,170,170)"/><rect x="93" y="520" width="2" height="2" fill="rgb(90,90,90)"/><rect x="1247" y="325" width="1" height="1" fill="rgb(255,255,255)"/><rect x="149" y="364" width="1" height="1" fill="rgb(90,90,90)"/><rect x="922" y="352" width="2" height="2" fill="rgb(255,255,255)"/><rect x="889" y="466" width="1" height="1" fill="rgb(200,200,200)"/><rect x="537" y="402" width="1" height="1" fill="rgb(230,230,230)"/><rect x="606" y="689" width="1" height="1" fill="rgb(90,90,90)"/><rect x="976" y="283" width="1" height="1" fill="rgb(90,90,90)"/><rect x="1259" y="300" width="1.4" height="1.4" fill="rgb(200,200,200)"/><rect x="201" y="450" width="1" height="1" fill="rgb(110,110,110)"/><rect x="1144" y="570" width="1" height="1" fill="rgb(255,255,255)"/><rect x="446" y="309" width="1.4" height="1.4" fill="rgb(110,110,110)"/><rect x="505" y="374" width="1" height="1" fill="rgb(90,90,90)"/><rect x="972" y="520" width="1" height="1" fill="rgb(130,130,130)"/><rect x="1182" y="330" width="1" height="1" fill="rgb(230,230,230)"/><rect x="222" y="333" width="1" height="1" fill="rgb(170,170,170)"/><rect x="1093" y="327" width="1" height="1" fill="rgb(110,110,110)"/><rect x="626" y="473" width="1.4" height="1.4" fill="rgb(130,130,130)"/><rect x="89" y="747" width="1.4" height="1.4" fill="rgb(150,150,150)"/><rect x="654" y="343" width="2" height="2" fill="rgb(170,170,170)"/><rect x="284" y="395" width="1" height="1" fill="rgb(170,170,170)"/><rect x="1255" y="219" width="1" height="1" fill="rgb(170,170,170)"/><rect x="1217" y="192" width="1" height="1" fill="rgb(170,170,170)"/><rect x="1327" y="165" width="1.4" height="1.4" fill="rgb(200,200,200)"/><rect x="201" y="155" width="1" height="1" fill="rgb(170,170,170)"/><rect x="497" y="181" width="1" height="1" fill="rgb(230,230,230)"/><rect x="385" y="274" width="1.4" height="1.4" fill="rgb(130,130,130)"/><rect x="1048" y="625" width="1.4" height="1.4" fill="rgb(150,150,150)"/><rect x="119" y="212" width="2" height="2" fill="rgb(255,255,255)"/><rect x="381" y="290" width="1.4" height="1.4" fill="rgb(150,150,150)"/><rect x="427" y="161" width="2" height="2" fill="rgb(230,230,230)"/><rect x="982" y="191" width="1" height="1" fill="rgb(200,200,200)"/><rect x="391" y="577" width="1" height="1" fill="rgb(255,255,255)"/><rect x="34" y="757" width="1" height="1" fill="rgb(255,255,255)"/><rect x="1184" y="330" width="1.4" height="1.4" fill="rgb(130,130,130)"/><rect x="1130" y="397" width="1.4" height="1.4" fill="rgb(130,130,130)"/><rect x="511" y="548" width="1" height="1" fill="rgb(90,90,90)"/><rect x="711" y="449" width="1" height="1" fill="rgb(110,110,110)"/><rect x="492" y="316" width="2" height="2" fill="rgb(200,200,200)"/><rect x="968" y="406" width="1" height="1" fill="rgb(90,90,90)"/><rect x="1185" y="786" width="1" height="1" fill="rgb(255,255,255)"/><rect x="702" y="505" width="1" height="1" fill="rgb(130,130,130)"/><rect x="340" y="213" width="1" height="1" fill="rgb(130,130,130)"/><rect x="151" y="320" width="1" height="1" fill="rgb(90,90,90)"/><rect x="143" y="617" width="1" height="1" fill="rgb(150,150,150)"/><rect x="37" y="551" width="1.4" height="1.4" fill="rgb(255,255,255)"/><rect x="333" y="448" width="2" height="2" fill="rgb(200,200,200)"/><rect x="139" y="272" width="1" height="1" fill="rgb(170,170,170)"/><rect x="637" y="542" width="1" height="1" fill="rgb(170,170,170)"/><rect x="177" y="423" width="1.4" height="1.4" fill="rgb(130,130,130)"/><rect x="808" y="724" width="1.4" height="1.4" fill="rgb(130,130,130)"/><rect x="782" y="648" width="2" height="2" fill="rgb(130,130,130)"/><rect x="38" y="574" width="1.4" height="1.4" fill="rgb(230,230,230)"/><rect x="1141" y="502" width="1" height="1" fill="rgb(230,230,230)"/><rect x="1056" y="378" width="2" height="2" fill="rgb(150,150,150)"/><rect x="463" y="442" width="2" height="2" fill="rgb(200,200,200)"/><rect x="551" y="525" width="1.4" height="1.4" fill="rgb(200,200,200)"/><rect x="210" y="604" width="1" height="1" fill="rgb(200,200,200)"/><rect x="1182" y="593" width="1" height="1" fill="rgb(90,90,90)"/><rect x="159" y="278" width="1" height="1" fill="rgb(200,200,200)"/><rect x="283" y="597" width="1" height="1" fill="rgb(150,150,150)"/><rect x="578" y="417" width="1.4" height="1.4" fill="rgb(255,255,255)"/><rect x="76" y="803" width="1" height="1" fill="rgb(90,90,90)"/><rect x="1176" y="565" width="1.4" height="1.4" fill="rgb(170,170,170)"/><rect x="741" y="766" width="1" height="1" fill="rgb(110,110,110)"/><rect x="176" y="163" width="1" height="1" fill="rgb(150,150,150)"/><rect x="399" y="356" width="1" height="1" fill="rgb(130,130,130)"/><rect x="94" y="789" width="1" height="1" fill="rgb(170,170,170)"/><rect x="639" y="507" width="1" height="1" fill="rgb(130,130,130)"/><rect x="179" y="241" width="1" height="1" fill="rgb(170,170,170)"/><rect x="788" y="335" width="1.4" height="1.4" fill="rgb(110,110,110)"/><rect x="747" y="710" width="1.4" height="1.4" fill="rgb(150,150,150)"/><rect x="532" y="517" width="1" height="1" fill="rgb(200,200,200)"/><rect x="1211" y="355" width="1" height="1" fill="rgb(255,255,255)"/><rect x="1113" y="174" width="1" height="1" fill="rgb(200,200,200)"/><rect x="267" y="515" width="1" height="1" fill="rgb(230,230,230)"/><rect x="1254" y="261" width="1" height="1" fill="rgb(150,150,150)"/><rect x="761" y="479" width="1" height="1" fill="rgb(170,170,170)"/><rect x="410" y="665" width="1.4" height="1.4" fill="rgb(130,130,130)"/><rect x="103" y="731" width="1.4" height="1.4" fill="rgb(255,255,255)"/><rect x="96" y="411" width="1" height="1" fill="rgb(255,255,255)"/><rect x="1001" y="226" width="1.4" height="1.4" fill="rgb(150,150,150)"/><rect x="1005" y="256" width="1.4" height="1.4" fill="rgb(200,200,200)"/><rect x="486" y="601" width="2" height="2" fill="rgb(170,170,170)"/><rect x="1140" y="217" width="1" height="1" fill="rgb(255,255,255)"/><rect x="1067" y="623" width="1" height="1" fill="rgb(130,130,130)"/><rect x="1183" y="157" width="1" height="1" fill="rgb(110,110,110)"/><rect x="547" y="811" width="1" height="1" fill="rgb(130,130,130)"/><rect x="1154" y="339" width="1" height="1" fill="rgb(110,110,110)"/><rect x="1157" y="613" width="1.4" height="1.4" fill="rgb(170,170,170)"/><rect x="487" y="388" width="1.4" height="1.4" fill="rgb(230,230,230)"/><rect x="445" y="675" width="1" height="1" fill="rgb(255,255,255)"/><rect x="609" y="276" width="2" height="2" fill="rgb(170,170,170)"/><rect x="208" y="535" width="1" height="1" fill="rgb(150,150,150)"/><rect x="1116" y="373" width="1" height="1" fill="rgb(150,150,150)"/><rect x="287" y="436" width="1" height="1" fill="rgb(90,90,90)"/><rect x="77" y="528" width="1" height="1" fill="rgb(255,255,255)"/><rect x="1249" y="666" width="1.4" height="1.4" fill="rgb(230,230,230)"/><rect x="1122" y="635" width="1" height="1" fill="rgb(230,230,230)"/><rect x="636" y="181" width="1" height="1" fill="rgb(200,200,200)"/><rect x="1286" y="602" width="1" height="1" fill="rgb(150,150,150)"/><rect x="563" y="486" width="1" height="1" fill="rgb(130,130,130)"/><rect x="1308" y="476" width="2" height="2" fill="rgb(255,255,255)"/><rect x="852" y="813" width="1.4" height="1.4" fill="rgb(200,200,200)"/><rect x="725" y="694" width="1" height="1" fill="rgb(130,130,130)"/><rect x="440" y="802" width="1.4" height="1.4" fill="rgb(170,170,170)"/><rect x="249" y="588" width="1.4" height="1.4" fill="rgb(170,170,170)"/><rect x="474" y="773" width="1.4" height="1.4" fill="rgb(230,230,230)"/><rect x="223" y="346" width="1.4" height="1.4" fill="rgb(150,150,150)"/><rect x="1212" y="427" width="1.4" height="1.4" fill="rgb(90,90,90)"/><rect x="772" y="225" width="1.4" height="1.4" fill="rgb(90,90,90)"/><rect x="566" y="675" width="1.4" height="1.4" fill="rgb(170,170,170)"/><rect x="941" y="157" width="1" height="1" fill="rgb(170,170,170)"/><rect x="1144" y="542" width="1" height="1" fill="rgb(90,90,90)"/><rect x="248" y="663" width="2" height="2" fill="rgb(170,170,170)"/><rect x="882" y="506" width="1.4" height="1.4" fill="rgb(130,130,130)"/><rect x="280" y="552" width="1" height="1" fill="rgb(130,130,130)"/><rect x="709" y="491" width="1" height="1" fill="rgb(90,90,90)"/><rect x="115" y="781" width="2" height="2" fill="rgb(255,255,255)"/><rect x="641" y="439" width="1.4" height="1.4" fill="rgb(90,90,90)"/><rect x="30" y="664" width="1" height="1" fill="rgb(200,200,200)"/><rect x="974" y="388" width="1" height="1" fill="rgb(130,130,130)"/><rect x="371" y="220" width="1" height="1" fill="rgb(110,110,110)"/></g><g clip-path="url(#skyc)"><circle cx="688" cy="166" r="4.2" fill="#fff"/><circle cx="351" cy="208" r="3.2" fill="#fff"/><circle cx="812" cy="275" r="3.6" fill="#fff"/><circle cx="810" cy="293.5" r="4.6" fill="#fff"/><circle cx="810" cy="293.5" r="7" fill="none" stroke="#fff" stroke-width="1"/><circle cx="941.5" cy="241.5" r="2.4" fill="#fff"/><circle cx="941.5" cy="241.5" r="3.6" fill="none" stroke="#fff" stroke-width="1"/><circle cx="969" cy="265.5" r="2.8" fill="#fff"/><circle cx="973" cy="265" r="2.8" fill="#fff"/><circle cx="733" cy="272.5" r="2.2" fill="#fff"/><circle cx="828.5" cy="427.5" r="3" fill="#fff"/><circle cx="957" cy="429.5" r="2.2" fill="#fff"/><circle cx="1007.5" cy="371.5" r="2.2" fill="#fff"/><circle cx="1071" cy="380.5" r="2.2" fill="#fff"/><circle cx="1034" cy="468.5" r="2" fill="#fff"/><circle cx="1165.5" cy="457.5" r="4" fill="#fff"/><circle cx="1239.5" cy="491.5" r="3.6" fill="#fff"/><circle cx="1239.5" cy="491.5" r="5.6" fill="none" stroke="#fff" stroke-width="1"/><circle cx="1336" cy="185.5" r="3" fill="#fff"/><circle cx="1335" cy="241.5" r="3" fill="#fff"/><circle cx="38" cy="563" r="3" fill="#fff"/><circle cx="91" cy="723.5" r="3.6" fill="#fff"/><circle cx="15" cy="233.5" r="2.2" fill="#fff"/><circle cx="1330" cy="730" r="2.2" fill="#fff"/><circle cx="784.7" cy="813.8" r="1.3" fill="#fff"/><circle cx="784.7" cy="813.8" r="2.6" fill="none" stroke="#fff" stroke-width="1"/></g><g clip-path="url(#skyc)" fill="none" stroke="#fff" stroke-width="1"><circle cx="685.5" cy="485.5" r="181.7" stroke-width="1.1"/><circle cx="685.5" cy="485.5" r="445" stroke-dasharray="3 3" stroke-width="1.1"/><circle cx="685.5" cy="485.5" r="626.3" stroke-dasharray="3 3" stroke-width="1.1"/><circle cx="685.5" cy="485.5" r="727" stroke-dasharray="3 3" stroke-width="1.1"/><path d="M316 234.500 L1027 200.300 L1055.500 734.500 L344 771.800 Z" stroke-width="1.2"/><path d="M732.500 759V777" stroke-width="1.2"/><ellipse cx="562" cy="186" rx="5.6" ry="3.4" transform="rotate(-50 562 186)" stroke="#ff1010" stroke-width="1.2"/><ellipse cx="95.5" cy="396" rx="2.6" ry="3.4" transform="rotate(-15 95.5 396)" stroke="#ff1010" stroke-width="1.2"/><rect x="87" y="397" width="2.5" height="1.6" fill="#ff1010" stroke="none"/><g stroke="#8a86dc" stroke-width="1"><path d="M1347.5 170V199.5M1341 199.5H1355M1348 185L1351.5 199.5"/><path d="M1338 166.5V159.5L1342.5 166.5V159.5" stroke-width="1"/></g></g></svg>
<div class="r " style="left:15.5px;top:158px;width:25.5px;height:24.5px;background:#fff;"></div>
<svg style="left:16px;top:158.500px" width="20" height="23" viewBox="0 0 22 24"><path d="M11 1.5c4.5-.5 7.5 3 7.2 8.5c-.3 6-2.500 11.500-7.200 12c-5 .5-8.500-3.500-8.500-9.500c0-5.500 3.500-10.500 8.500-11z" fill="#8f8f8f"/></svg>
<div class="r " style="left:17px;top:186px;width:141px;height:87px;background:#fff;"></div>
<span class="t" style="left:21px;top:188.5px;font-size:11.5px;color:#000;font-family:'Liberation Mono',monospace;letter-spacing:-0.012px;">C/2016R2(PANSTARRS)</span>
<div class="r " style="left:10.5px;top:819px;width:1348.5px;height:25px;background:#fff;"></div>
<div class="r " style="left:12px;top:821px;width:69px;height:21.5px;background:#fff;border:1px solid #a6a6a6;border-right-color:#fff;border-bottom-color:#fff;"></div>
<div class="r " style="left:83px;top:821px;width:650px;height:21.5px;background:#fff;border:1px solid #a6a6a6;border-right-color:#fff;border-bottom-color:#fff;"></div>
<div class="r " style="left:735px;top:821px;width:263px;height:21.5px;background:#fff;border:1px solid #a6a6a6;border-right-color:#fff;border-bottom-color:#fff;"></div>
<div class="r " style="left:1001.5px;top:821px;width:325.5px;height:21.5px;background:#fff;border:1px solid #a6a6a6;border-right-color:#fff;border-bottom-color:#fff;"></div>
<span class="t" style="left:17px;top:823px;font-size:12px;color:#000;letter-spacing:-0.839px;">Zoom=64</span>
<span class="t" style="left:88.5px;top:823px;font-size:12px;color:#000;letter-spacing:-0.672px;">Alpha= 1</span>
<span class="t" style="left:736.5px;top:823px;font-size:12px;color:#c00000;letter-spacing:-0.668px;">Equatorial, sideral, Date/heure PC temps réel</span>
<div class="r " style="left:727px;top:822px;width:9px;height:20px;background:#fff;"></div>
<span class="t" style="left:727.5px;top:823px;font-size:12px;color:#c00000;">e</span>
<span class="t" style="left:1007px;top:823px;font-size:12px;color:#c00000;letter-spacing:-2.328px;">EQ</span>
<!-- s_temp -->
<div class="r " style="left:132px;top:213px;width:599px;height:416px;background:#e2ecf7;border:1px solid #b9c6d6;border-radius:6px 6px 0 0;box-shadow:inset 0 0 0 1px #eef4fb;"></div>
<div class="r " style="left:133px;top:214px;width:597px;height:30px;background:linear-gradient(#c4cfde 0%,#c9d7e8 14%,#cfddee 50%,#dbe7f4 80%,#e1ebf7 100%);border-radius:5px 5px 0 0;"></div>
<svg style="left:142px;top:223px" width="17" height="17" viewBox="0 0 17 17"><g transform="translate(8.5 8.5)"><g fill="#3c3c3c"><rect x="-1.7" y="-8" width="3.4" height="4" rx=".8" transform="rotate(0)"/><rect x="-1.7" y="-8" width="3.4" height="4" rx=".8" transform="rotate(45)"/><rect x="-1.7" y="-8" width="3.4" height="4" rx=".8" transform="rotate(90)"/><rect x="-1.7" y="-8" width="3.4" height="4" rx=".8" transform="rotate(135)"/><rect x="-1.7" y="-8" width="3.4" height="4" rx=".8" transform="rotate(180)"/><rect x="-1.7" y="-8" width="3.4" height="4" rx=".8" transform="rotate(225)"/><rect x="-1.7" y="-8" width="3.4" height="4" rx=".8" transform="rotate(270)"/><rect x="-1.7" y="-8" width="3.4" height="4" rx=".8" transform="rotate(315)"/></g><circle r="5.6" fill="#4a4a4a"/><circle r="3.6" fill="#9a9a9a"/><circle r="1.7" fill="#e0e0e0"/></g></svg>
<span class="t" style="left:162px;top:224.8px;font-size:12.5px;color:#8f9cac;letter-spacing:-0.511px;">Temperature CCD, toutes les 5s</span>
<div class="r " style="left:622px;top:222px;width:31.5px;height:17.5px;background:linear-gradient(#d3e0ef,#c2d2e5);border:1px solid #8e9db2;border-radius:3px;box-shadow:inset 0 0 0 1px rgba(255,255,255,.45);"></div>
<div class="r " style="left:656px;top:222px;width:31.5px;height:17.5px;background:linear-gradient(#d3e0ef,#c2d2e5);border:1px solid #8e9db2;border-radius:3px;box-shadow:inset 0 0 0 1px rgba(255,255,255,.45);"></div>
<div class="r " style="left:690px;top:222px;width:31.5px;height:17.5px;background:linear-gradient(#d3e0ef,#c2d2e5);border:1px solid #8e9db2;border-radius:3px;box-shadow:inset 0 0 0 1px rgba(255,255,255,.45);"></div>
<svg style="left:622px;top:222px" width="100" height="18" viewBox="0 0 100 18">
<rect x="10" y="8" width="10.5" height="4.5" rx="1" fill="#fff" stroke="#4a5568" stroke-width="1.2"/>
<rect x="44" y="4.5" width="11" height="8" rx="1" fill="#fff" stroke="#4a5568" stroke-width="1.2"/><rect x="46.8" y="7.3" width="5.4" height="2.4" fill="#fff" stroke="#4a5568" stroke-width="1"/>
<path d="M78 4L81.300 4L83.500 6.400L85.700 4L89 4L85.300 8.300L89 12.600L85.700 12.600L83.500 10.200L81.300 12.600L78 12.600L81.700 8.300Z" fill="#fff" stroke="#444e60" stroke-width="1.200" stroke-linejoin="round"/>
</svg>
<div class="r " style="left:141px;top:244px;width:580px;height:378px;background:#fff;border-top:1px solid #aab6c6;border-left:1px solid #c8d2de;"></div>
<div class="r " style="left:143px;top:245.5px;width:578px;height:329px;background:#fff;border:1px solid #000;"></div>
<span class="t" style="left:192px;top:270.5px;font-size:11px;color:#000;letter-spacing:-0.158px;">Temperature CCD, toutes les 5s</span>
<svg style="left:0;top:0" width="1920" height="1080" viewBox="0 0 1920 1080"><path d="M192.5 353.5H671.5" stroke="#a8a8a8" stroke-width="1"/><path d="M192.5 411H671.5" stroke="#a8a8a8" stroke-width="1"/><path d="M192.5 468.5H671.5" stroke="#a8a8a8" stroke-width="1"/><path d="M420.5 296V526" stroke="#a8a8a8" stroke-width="1"/><path d="M659.5 296V526" stroke="#a8a8a8" stroke-width="1"/><rect x="192.5" y="296" width="479" height="230" fill="none" stroke="#000" stroke-width="1.5"/><path d="M183.5 296H192.5M187.5 301.75H192.5M187.5 307.50H192.5M187.5 313.25H192.5M187.5 319.00H192.5M187.5 324.75H192.5M187.5 330.50H192.5M187.5 336.25H192.5M187.5 342.00H192.5M187.5 347.75H192.5M183.5 353.5H192.5M187.5 359.25H192.5M187.5 365.00H192.5M187.5 370.75H192.5M187.5 376.50H192.5M187.5 382.25H192.5M187.5 388.00H192.5M187.5 393.75H192.5M187.5 399.50H192.5M187.5 405.25H192.5M183.5 411H192.5M187.5 416.75H192.5M187.5 422.50H192.5M187.5 428.25H192.5M187.5 434.00H192.5M187.5 439.75H192.5M187.5 445.50H192.5M187.5 451.25H192.5M187.5 457.00H192.5M187.5 462.75H192.5M183.5 468.5H192.5M187.5 474.25H192.5M187.5 480.00H192.5M187.5 485.75H192.5M187.5 491.50H192.5M187.5 497.25H192.5M187.5 503.00H192.5M187.5 508.75H192.5M187.5 514.50H192.5M187.5 520.25H192.5M183.5 526H192.5M204.90 526V530.5M228.86 526V530.5M252.82 526V530.5M276.78 526V530.5M300.74 526V530.5M324.70 526V530.5M348.66 526V530.5M372.62 526V530.5M396.58 526V530.5M420.54 526V530.5M444.50 526V530.5M468.46 526V530.5M492.42 526V530.5M516.38 526V530.5M540.34 526V530.5M564.30 526V530.5M588.26 526V530.5M612.22 526V530.5M636.18 526V530.5M660.14 526V530.5M420.50 526V535M659.50 526V535" stroke="#000" stroke-width=".95" fill="none"/><path d="M192.5 410.7H671.5" stroke="#000" stroke-width="1.3"/><circle cx="192.50" cy="410.7" r="3" fill="none" stroke="#000" stroke-width="1"/><circle cx="212.46" cy="410.7" r="3" fill="none" stroke="#000" stroke-width="1"/><circle cx="232.42" cy="410.7" r="3" fill="none" stroke="#000" stroke-width="1"/><circle cx="252.38" cy="410.7" r="3" fill="none" stroke="#000" stroke-width="1"/><circle cx="272.34" cy="410.7" r="3" fill="none" stroke="#000" stroke-width="1"/><circle cx="292.30" cy="410.7" r="3" fill="none" stroke="#000" stroke-width="1"/><circle cx="312.26" cy="410.7" r="3" fill="none" stroke="#000" stroke-width="1"/><circle cx="332.22" cy="410.7" r="3" fill="none" stroke="#000" stroke-width="1"/><circle cx="352.18" cy="410.7" r="3" fill="none" stroke="#000" stroke-width="1"/><circle cx="372.14" cy="410.7" r="3" fill="none" stroke="#000" stroke-width="1"/><circle cx="392.10" cy="410.7" r="3" fill="none" stroke="#000" stroke-width="1"/><circle cx="412.06" cy="410.7" r="3" fill="none" stroke="#000" stroke-width="1"/><circle cx="432.02" cy="410.7" r="3" fill="none" stroke="#000" stroke-width="1"/><circle cx="451.98" cy="410.7" r="3" fill="none" stroke="#000" stroke-width="1"/><circle cx="471.94" cy="410.7" r="3" fill="none" stroke="#000" stroke-width="1"/><circle cx="491.90" cy="410.7" r="3" fill="none" stroke="#000" stroke-width="1"/><circle cx="511.86" cy="410.7" r="3" fill="none" stroke="#000" stroke-width="1"/><circle cx="531.82" cy="410.7" r="3" fill="none" stroke="#000" stroke-width="1"/><circle cx="551.78" cy="410.7" r="3" fill="none" stroke="#000" stroke-width="1"/><circle cx="571.74" cy="410.7" r="3" fill="none" stroke="#000" stroke-width="1"/><circle cx="591.70" cy="410.7" r="3" fill="none" stroke="#000" stroke-width="1"/><circle cx="611.66" cy="410.7" r="3" fill="none" stroke="#000" stroke-width="1"/><circle cx="631.62" cy="410.7" r="3" fill="none" stroke="#000" stroke-width="1"/><circle cx="651.58" cy="410.7" r="3" fill="none" stroke="#000" stroke-width="1"/><circle cx="671.54" cy="410.7" r="3" fill="none" stroke="#000" stroke-width="1"/><path d="M666 410.7H678M671.5 407V414" stroke="#e02020" stroke-width="1"/></svg>
<span class="t" style="left:165.45px;top:289.6px;font-size:11px;color:#000;">22</span>
<span class="t" style="left:165.45px;top:347.1px;font-size:11px;color:#000;">21</span>
<span class="t" style="left:165.45px;top:404.6px;font-size:11px;color:#000;">20</span>
<span class="t" style="left:165.45px;top:462.1px;font-size:11px;color:#000;">19</span>
<span class="t" style="left:165.45px;top:519.6px;font-size:11px;color:#000;">18</span>
<span class="t" style="left:416.438px;top:539px;font-size:11px;color:#000;">1</span>
<span class="t" style="left:655.438px;top:539px;font-size:11px;color:#000;">2</span>
<span class="t" style="left:401px;top:556px;font-size:11px;color:#000;letter-spacing:-0.150px;">Temps (Min)</span>
<span class="t" style="left:685.328px;top:356px;font-size:11px;color:#000;">V</span>
<span class="t" style="left:685.938px;top:366px;font-size:11px;color:#000;">a</span>
<span class="t" style="left:687.781px;top:376px;font-size:11px;color:#000;">l</span>
<span class="t" style="left:685.938px;top:386px;font-size:11px;color:#000;">e</span>
<span class="t" style="left:685.938px;top:396px;font-size:11px;color:#000;">u</span>
<span class="t" style="left:687.172px;top:406px;font-size:11px;color:#000;">r</span>
<span class="t" style="left:686px;top:435px;font-size:11px;color:#000;">°</span>
<span class="t" style="left:685px;top:446px;font-size:11px;color:#000;">C</span>
<div class="r " style="left:141px;top:580px;width:72.5px;height:21px;background:#efefef;border:1px solid #adadad;"></div>
<span class="t" style="left:155px;top:583.5px;font-size:12px;color:#000;letter-spacing:-0.815px;">Réglages</span>
<div class="r " style="left:141px;top:601.5px;width:580px;height:20px;background:#fff;border-top:1px solid #e4e4e4;"></div>
<div class="r " style="left:289px;top:605px;width:1px;height:15px;background:#e0e0e0;"></div>
<span class="t" style="left:142.5px;top:605px;font-size:12px;color:#000;letter-spacing:-0.839px;">579x330</span>
<svg style="left:711px;top:611px" width="10" height="10" viewBox="0 0 10 10"><g fill="#b8b8b8"><rect x="7" y="1" width="2" height="2"/><rect x="4" y="4" width="2" height="2"/><rect x="7" y="4" width="2" height="2"/><rect x="1" y="7" width="2" height="2"/><rect x="4" y="7" width="2" height="2"/><rect x="7" y="7" width="2" height="2"/></g></svg>
<!-- s_puis -->
<div class="r " style="left:132px;top:652px;width:599px;height:420px;background:#e2ecf7;border:1px solid #b9c6d6;border-radius:6px 6px 0 0;box-shadow:inset 0 0 0 1px #eef4fb;"></div>
<div class="r " style="left:133px;top:653px;width:597px;height:30px;background:linear-gradient(#c4cfde 0%,#c9d7e8 14%,#cfddee 50%,#dbe7f4 80%,#e1ebf7 100%);border-radius:5px 5px 0 0;"></div>
<svg style="left:142px;top:662px" width="17" height="17" viewBox="0 0 17 17"><g transform="translate(8.5 8.5)"><g fill="#3c3c3c"><rect x="-1.7" y="-8" width="3.4" height="4" rx=".8" transform="rotate(0)"/><rect x="-1.7" y="-8" width="3.4" height="4" rx=".8" transform="rotate(45)"/><rect x="-1.7" y="-8" width="3.4" height="4" rx=".8" transform="rotate(90)"/><rect x="-1.7" y="-8" width="3.4" height="4" rx=".8" transform="rotate(135)"/><rect x="-1.7" y="-8" width="3.4" height="4" rx=".8" transform="rotate(180)"/><rect x="-1.7" y="-8" width="3.4" height="4" rx=".8" transform="rotate(225)"/><rect x="-1.7" y="-8" width="3.4" height="4" rx=".8" transform="rotate(270)"/><rect x="-1.7" y="-8" width="3.4" height="4" rx=".8" transform="rotate(315)"/></g><circle r="5.6" fill="#4a4a4a"/><circle r="3.6" fill="#9a9a9a"/><circle r="1.7" fill="#e0e0e0"/></g></svg>
<span class="t" style="left:162px;top:663.8px;font-size:12.5px;color:#8f9cac;letter-spacing:-0.570px;">Puissance, toute les 5s</span>
<div class="r " style="left:622px;top:661px;width:31.5px;height:17.5px;background:linear-gradient(#d3e0ef,#c2d2e5);border:1px solid #8e9db2;border-radius:3px;box-shadow:inset 0 0 0 1px rgba(255,255,255,.45);"></div>
<div class="r " style="left:656px;top:661px;width:31.5px;height:17.5px;background:linear-gradient(#d3e0ef,#c2d2e5);border:1px solid #8e9db2;border-radius:3px;box-shadow:inset 0 0 0 1px rgba(255,255,255,.45);"></div>
<div class="r " style="left:690px;top:661px;width:31.5px;height:17.5px;background:linear-gradient(#d3e0ef,#c2d2e5);border:1px solid #8e9db2;border-radius:3px;box-shadow:inset 0 0 0 1px rgba(255,255,255,.45);"></div>
<svg style="left:622px;top:661px" width="100" height="18" viewBox="0 0 100 18">
<rect x="10" y="8" width="10.5" height="4.5" rx="1" fill="#fff" stroke="#4a5568" stroke-width="1.2"/>
<rect x="44" y="4.5" width="11" height="8" rx="1" fill="#fff" stroke="#4a5568" stroke-width="1.2"/><rect x="46.8" y="7.3" width="5.4" height="2.4" fill="#fff" stroke="#4a5568" stroke-width="1"/>
<path d="M78 4L81.300 4L83.500 6.400L85.700 4L89 4L85.300 8.300L89 12.600L85.700 12.600L83.500 10.200L81.300 12.600L78 12.600L81.700 8.300Z" fill="#fff" stroke="#444e60" stroke-width="1.200" stroke-linejoin="round"/>
</svg>
<div class="r " style="left:141px;top:683px;width:580px;height:382px;background:#fff;border-top:1px solid #aab6c6;border-left:1px solid #c8d2de;"></div>
<div class="r " style="left:143px;top:684.5px;width:578px;height:329px;background:#fff;border:1px solid #000;"></div>
<span class="t" style="left:192px;top:709.5px;font-size:11px;color:#000;letter-spacing:-0.055px;">Puissance, toute les 5s</span>
<svg style="left:0;top:0" width="1920" height="1080" viewBox="0 0 1920 1080"><path d="M192.5 792.5H671.5" stroke="#a8a8a8" stroke-width="1"/><path d="M192.5 850H671.5" stroke="#a8a8a8" stroke-width="1"/><path d="M192.5 907.5H671.5" stroke="#a8a8a8" stroke-width="1"/><path d="M255.5 735V965" stroke="#a8a8a8" stroke-width="1"/><path d="M426.75 735V965" stroke="#a8a8a8" stroke-width="1"/><path d="M598 735V965" stroke="#a8a8a8" stroke-width="1"/><rect x="192.5" y="735" width="479" height="230" fill="none" stroke="#000" stroke-width="1.5"/><path d="M183.5 735H192.5M187.5 740.75H192.5M187.5 746.50H192.5M187.5 752.25H192.5M187.5 758.00H192.5M187.5 763.75H192.5M187.5 769.50H192.5M187.5 775.25H192.5M187.5 781.00H192.5M187.5 786.75H192.5M183.5 792.5H192.5M187.5 798.25H192.5M187.5 804.00H192.5M187.5 809.75H192.5M187.5 815.50H192.5M187.5 821.25H192.5M187.5 827.00H192.5M187.5 832.75H192.5M187.5 838.50H192.5M187.5 844.25H192.5M183.5 850H192.5M187.5 855.75H192.5M187.5 861.50H192.5M187.5 867.25H192.5M187.5 873.00H192.5M187.5 878.75H192.5M187.5 884.50H192.5M187.5 890.25H192.5M187.5 896.00H192.5M187.5 901.75H192.5M183.5 907.5H192.5M187.5 913.25H192.5M187.5 919.00H192.5M187.5 924.75H192.5M187.5 930.50H192.5M187.5 936.25H192.5M187.5 942.00H192.5M187.5 947.75H192.5M187.5 953.50H192.5M187.5 959.25H192.5M183.5 965H192.5M204.10 965V969.5M221.22 965V969.5M238.35 965V969.5M255.47 965V969.5M272.60 965V969.5M289.73 965V969.5M306.85 965V969.5M323.98 965V969.5M341.10 965V969.5M358.23 965V969.5M375.35 965V969.5M392.48 965V969.5M409.60 965V969.5M426.73 965V969.5M443.85 965V969.5M460.98 965V969.5M478.10 965V969.5M495.23 965V969.5M512.35 965V969.5M529.48 965V969.5M546.60 965V969.5M563.73 965V969.5M580.85 965V969.5M597.98 965V969.5M615.10 965V969.5M632.23 965V969.5M649.35 965V969.5M666.48 965V969.5M255.50 965V974M426.75 965V974M598.00 965V974" stroke="#000" stroke-width=".95" fill="none"/><path d="M255.5 736V964" stroke="#e02020" stroke-width="1.7" stroke-dasharray="6 2 1.500 2"/><polyline points="260.5,965.0 274.8,735.0 289.0,735.0 303.3,965.0 317.6,907.5 331.9,907.5 346.1,735.0 360.4,907.5 374.7,907.5 388.9,907.5 403.2,735.0 417.5,907.5 431.7,907.5 446.0,965.0 460.3,735.0 474.5,965.0 488.8,735.0 503.1,907.5 517.4,907.5 531.6,735.0 545.9,907.5 560.2,907.5 574.4,907.5 588.7,907.5 603.0,907.5" fill="none" stroke="#000" stroke-width="1"/><circle cx="260.5" cy="965.0" r="3" fill="none" stroke="#000" stroke-width="1"/><circle cx="274.8" cy="735.0" r="3" fill="none" stroke="#000" stroke-width="1"/><circle cx="289.0" cy="735.0" r="3" fill="none" stroke="#000" stroke-width="1"/><circle cx="303.3" cy="965.0" r="3" fill="none" stroke="#000" stroke-width="1"/><circle cx="317.6" cy="907.5" r="3" fill="none" stroke="#000" stroke-width="1"/><circle cx="331.9" cy="907.5" r="3" fill="none" stroke="#000" stroke-width="1"/><circle cx="346.1" cy="735.0" r="3" fill="none" stroke="#000" stroke-width="1"/><circle cx="360.4" cy="907.5" r="3" fill="none" stroke="#000" stroke-width="1"/><circle cx="374.7" cy="907.5" r="3" fill="none" stroke="#000" stroke-width="1"/><circle cx="388.9" cy="907.5" r="3" fill="none" stroke="#000" stroke-width="1"/><circle cx="403.2" cy="735.0" r="3" fill="none" stroke="#000" stroke-width="1"/><circle cx="417.5" cy="907.5" r="3" fill="none" stroke="#000" stroke-width="1"/><circle cx="431.7" cy="907.5" r="3" fill="none" stroke="#000" stroke-width="1"/><circle cx="446.0" cy="965.0" r="3" fill="none" stroke="#000" stroke-width="1"/><circle cx="460.3" cy="735.0" r="3" fill="none" stroke="#000" stroke-width="1"/><circle cx="474.5" cy="965.0" r="3" fill="none" stroke="#000" stroke-width="1"/><circle cx="488.8" cy="735.0" r="3" fill="none" stroke="#000" stroke-width="1"/><circle cx="503.1" cy="907.5" r="3" fill="none" stroke="#000" stroke-width="1"/><circle cx="517.4" cy="907.5" r="3" fill="none" stroke="#000" stroke-width="1"/><circle cx="531.6" cy="735.0" r="3" fill="none" stroke="#000" stroke-width="1"/><circle cx="545.9" cy="907.5" r="3" fill="none" stroke="#000" stroke-width="1"/><circle cx="560.2" cy="907.5" r="3" fill="none" stroke="#000" stroke-width="1"/><circle cx="574.4" cy="907.5" r="3" fill="none" stroke="#000" stroke-width="1"/><circle cx="588.7" cy="907.5" r="3" fill="none" stroke="#000" stroke-width="1"/><circle cx="603.0" cy="907.5" r="3" fill="none" stroke="#000" stroke-width="1"/><path d="M596.0 907.5h14M603.0 900v14" stroke="#e02020" stroke-width="1"/></svg>
<span class="t" style="left:171.575px;top:728.6px;font-size:11px;color:#000;">8</span>
<span class="t" style="left:171.575px;top:786.1px;font-size:11px;color:#000;">7</span>
<span class="t" style="left:171.575px;top:843.6px;font-size:11px;color:#000;">6</span>
<span class="t" style="left:171.575px;top:901.1px;font-size:11px;color:#000;">5</span>
<span class="t" style="left:171.575px;top:958.6px;font-size:11px;color:#000;">4</span>
<span class="t" style="left:251.438px;top:978px;font-size:11px;color:#000;">0</span>
<span class="t" style="left:422.688px;top:978px;font-size:11px;color:#000;">1</span>
<span class="t" style="left:593.938px;top:978px;font-size:11px;color:#000;">2</span>
<span class="t" style="left:401px;top:995px;font-size:11px;color:#000;letter-spacing:-0.150px;">Temps (Min)</span>
<span class="t" style="left:685.328px;top:801px;font-size:11px;color:#000;">V</span>
<span class="t" style="left:685.938px;top:811px;font-size:11px;color:#000;">a</span>
<span class="t" style="left:687.781px;top:821px;font-size:11px;color:#000;">l</span>
<span class="t" style="left:685.938px;top:831px;font-size:11px;color:#000;">e</span>
<span class="t" style="left:685.938px;top:841px;font-size:11px;color:#000;">u</span>
<span class="t" style="left:687.172px;top:851px;font-size:11px;color:#000;">r</span>
<span class="t" style="left:685px;top:879px;font-size:11px;color:#000;">%</span>
<div class="r " style="left:0px;top:1010px;width:1400px;height:30px;background:#fff;"></div>
<!-- s_qsi -->
<div class="r " style="left:1370px;top:87px;width:250px;height:1px;background:#2f7ac0;"></div>
<span class="t" style="left:1373.5px;top:92.3px;font-size:12.5px;color:#000;transform:scaleX(0.8423);transform-origin:0 0;">QSI 583ws</span>
<span class="t" style="left:1435.5px;top:92.3px;font-size:12.5px;color:#000;transform:scaleX(1.0477);transform-origin:0 0;">-&gt;</span>
<span class="t" style="left:1454.8px;top:92.3px;font-size:12.5px;color:#000;transform:scaleX(0.8420);transform-origin:0 0;">20.0°C</span>
<span class="t" style="left:1497.8px;top:92.3px;font-size:12.5px;color:#000;transform:scaleX(0.8947);transform-origin:0 0;">[9% , 20.0°C]</span>
<div class="r " style="left:1600px;top:90px;width:19px;height:19px;background:#d9484c;"></div>
<svg style="left:1605.500px;top:95.500px" width="8" height="8" viewBox="0 0 8 8"><path d="M1.200 1.500L6.800 6.500M6.800 1.500L1.200 6.500" stroke="#fff" stroke-width="1.7"/></svg>
<div class="r " style="left:1371px;top:133px;width:247px;height:383px;background:#fff;border:1px solid #dcdcdc;"></div>
<div class="r " style="left:1370.5px;top:113.5px;width:67px;height:20.5px;background:#fff;border:1px solid #dcdcdc;border-bottom:none;"></div>
<span class="t" style="left:1378.5px;top:115.8px;font-size:12.5px;color:#000;transform:scaleX(0.8423);transform-origin:0 0;">QSI 583ws</span>
<div class="r " style="left:1375px;top:138.5px;width:119px;height:37px;background:#efefef;border:1px solid #adadad;"></div>
<span class="t" style="left:1404px;top:151.25px;font-size:12.5px;color:#000;transform:scaleX(0.8524);transform-origin:0 0;">DEMARRER</span>
<div class="r " style="left:1497px;top:138.5px;width:119px;height:37px;background:#cccccc;border:1px solid #bfbfbf;"></div>
<span class="t" style="left:1522.5px;top:151.25px;font-size:12.5px;color:#838383;transform:scaleX(0.7705);transform-origin:0 0;">ABANDONNER</span>
<span class="t" style="left:1379px;top:180.8px;font-size:12.5px;color:#000;transform:scaleX(0.8317);transform-origin:0 0;">Temps:</span>
<div class="r " style="left:1382px;top:207px;width:226px;height:1px;background:#a0a0a0;"></div>
<span class="t" style="left:1378.5px;top:214.8px;font-size:12.5px;color:#000;transform:scaleX(0.8336);transform-origin:0 0;">Exp.(sec)</span>
<div class="r " style="left:1426px;top:212.5px;width:65px;height:20.5px;background:#fff;border:1px solid #7a7a7a;"></div>
<span class="t" style="left:1430px;top:215.15px;font-size:12.5px;color:#000;">1</span>
<svg style="left:1477px;top:220.25px" width="10" height="6" viewBox="0 0 10 6"><path d="M1 1L5 5L9 1" fill="none" stroke="#444" stroke-width="1.1"/></svg>
<span class="t" style="left:1494.5px;top:211.8px;font-size:12.5px;color:#000;transform:scaleX(0.8631);transform-origin:0 0;">Bouclage</span>
<div class="r " style="left:1576px;top:212.5px;width:13px;height:13px;background:#fff;border:1px solid #333;"></div>
<div class="r " style="left:1595.5px;top:211px;width:17.5px;height:17.5px;background:#cccccc;border:1px solid #bfbfbf;"></div>
<svg style="left:1600px;top:215.500px" width="9" height="9" viewBox="0 0 9 9"><path d="M1 1L8 8M8 1L1 8" stroke="#a3a3a3" stroke-width="1"/></svg>
<span class="t" style="left:1494.5px;top:230.6px;font-size:12.5px;color:#000;transform:scaleX(0.8484);transform-origin:0 0;">Bouclage infini</span>
<div class="r " style="left:1576px;top:231.5px;width:13px;height:13px;background:#fff;border:1px solid #333;"></div>
<span class="t" style="left:1378.5px;top:251.6px;font-size:12.5px;color:#000;transform:scaleX(0.8514);transform-origin:0 0;">Nbre de boucles</span>
<div class="r " style="left:1458px;top:249.5px;width:54.5px;height:21px;background:#fff;border:1px solid #7a7a7a;"></div>
<span class="t" style="left:1462px;top:252.4px;font-size:12.5px;color:#000;transform:scaleX(0.8600);transform-origin:0 0;">10</span>
<div class="r " style="left:1495.5px;top:252px;width:13px;height:7.5px;background:#f0f0f0;border:1px solid #c9c9c9;"></div>
<div class="r " style="left:1495.5px;top:260.5px;width:13px;height:7.5px;background:#f0f0f0;border:1px solid #c9c9c9;"></div>
<svg style="left:1495.5px;top:251.5px" width="13" height="17" viewBox="0 0 13 17"><path d="M3.500 7L6.500 3.500L9.500 7Z M3.500 10L6.500 13.5L9.500 10Z" fill="#000"/></svg>
<span class="t" style="left:1517.5px;top:251.6px;font-size:12.5px;color:#000;transform:scaleX(0.8167);transform-origin:0 0;">Délai (s)</span>
<div class="r " style="left:1564px;top:249.5px;width:40px;height:21px;background:#fff;border:1px solid #7a7a7a;"></div>
<span class="t" style="left:1568px;top:252.4px;font-size:12.5px;color:#000;">1</span>
<div class="r " style="left:1587px;top:252px;width:13px;height:7.5px;background:#f0f0f0;border:1px solid #c9c9c9;"></div>
<div class="r " style="left:1587px;top:260.5px;width:13px;height:7.5px;background:#f0f0f0;border:1px solid #c9c9c9;"></div>
<svg style="left:1587px;top:251.5px" width="13" height="17" viewBox="0 0 13 17"><path d="M3.500 7L6.500 3.500L9.500 7Z M3.500 10L6.500 13.5L9.500 10Z" fill="#000"/></svg>
<div class="r " style="left:1382px;top:276.5px;width:226px;height:1px;background:#a0a0a0;"></div>
<span class="t" style="left:1378.5px;top:283.5px;font-size:12.5px;color:#000;transform:scaleX(0.8029);transform-origin:0 0;">BinX:</span>
<div class="r " style="left:1408px;top:282.5px;width:40px;height:21px;background:#fff;border:1px solid #7a7a7a;"></div>
<span class="t" style="left:1412px;top:285.4px;font-size:12.5px;color:#000;">1</span>
<div class="r " style="left:1431px;top:285px;width:13px;height:7.5px;background:#f0f0f0;border:1px solid #c9c9c9;"></div>
<div class="r " style="left:1431px;top:293.5px;width:13px;height:7.5px;background:#f0f0f0;border:1px solid #c9c9c9;"></div>
<svg style="left:1431px;top:284.5px" width="13" height="17" viewBox="0 0 13 17"><path d="M3.500 7L6.500 3.500L9.500 7Z M3.500 10L6.500 13.5L9.500 10Z" fill="#000"/></svg>
<span class="t" style="left:1458.5px;top:283.5px;font-size:12.5px;color:#000;transform:scaleX(0.8218);transform-origin:0 0;">BinY:</span>
<div class="r " style="left:1493px;top:282.5px;width:40px;height:21px;background:#fff;border:1px solid #7a7a7a;"></div>
<span class="t" style="left:1497px;top:285.4px;font-size:12.5px;color:#000;">1</span>
<div class="r " style="left:1516px;top:285px;width:13px;height:7.5px;background:#f0f0f0;border:1px solid #c9c9c9;"></div>
<div class="r " style="left:1516px;top:293.5px;width:13px;height:7.5px;background:#f0f0f0;border:1px solid #c9c9c9;"></div>
<svg style="left:1516px;top:284.5px" width="13" height="17" viewBox="0 0 13 17"><path d="M3.500 7L6.500 3.500L9.500 7Z M3.500 10L6.500 13.5L9.500 10Z" fill="#000"/></svg>
<div class="r " style="left:1549px;top:286px;width:13px;height:13px;background:#fff;border:1px solid #333;"></div>
<svg style="left:1549px;top:286px" width="13" height="13" viewBox="0 0 13 13"><path d="M2.800 6.800L5.300 9.300L10.300 3.600" fill="none" stroke="#222" stroke-width="1.3"/></svg>
<span class="t" style="left:1565.5px;top:285.8px;font-size:12.5px;color:#000;transform:scaleX(0.7916);transform-origin:0 0;">Lier</span>
<div class="r " style="left:1380px;top:310px;width:73px;height:22.5px;background:#efefef;border:1px solid #adadad;"></div>
<span class="t" style="left:1388px;top:314.5px;font-size:12.5px;color:#000;transform:scaleX(0.8541);transform-origin:0 0;">Exp Longue</span>
<div class="r " style="left:1460px;top:310px;width:73px;height:22.5px;background:#efefef;border:1px solid #adadad;"></div>
<span class="t" style="left:1469.5px;top:314.5px;font-size:12.5px;color:#000;transform:scaleX(0.8542);transform-origin:0 0;">Exp. courte</span>
<div class="r " style="left:1540px;top:310px;width:73px;height:22.5px;background:#efefef;border:1px solid #adadad;"></div>
<span class="t" style="left:1552px;top:314.5px;font-size:12.5px;color:#000;transform:scaleX(0.8701);transform-origin:0 0;">Sequence</span>
<div class="r " style="left:1390px;top:336px;width:209px;height:15.5px;background:#ffff00;"></div>
<span class="t" style="left:1455.5px;top:336.3px;font-size:12.5px;color:#000;transform:scaleX(0.8006);transform-origin:0 0;">Caméra n°1</span>
<div class="r " style="left:1374.5px;top:373px;width:239.5px;height:139px;background:#fff;border:1px solid #dcdcdc;"></div>
<div class="r " style="left:1376.5px;top:355.5px;width:59px;height:18px;background:#fff;border:1px solid #dcdcdc;border-bottom:none;"></div>
<div class="r " style="left:1435px;top:355.5px;width:48px;height:18px;background:#fff;border:1px solid #dcdcdc;border-bottom:none;"></div>
<div class="r " style="left:1552px;top:355.5px;width:34px;height:18px;background:#fff;border:1px solid #dcdcdc;border-bottom:none;border-left:none;"></div>
<div class="r " style="left:1482.5px;top:353.5px;width:70.5px;height:20.5px;background:#fff;border:1px solid #dcdcdc;border-bottom:none;"></div>
<span class="t" style="left:1382.5px;top:357.8px;font-size:12.5px;color:#000;transform:scaleX(0.8336);transform-origin:0 0;">Fenêtrage</span>
<span class="t" style="left:1442.5px;top:357.8px;font-size:12.5px;color:#000;transform:scaleX(0.7986);transform-origin:0 0;">Caméra</span>
<span class="t" style="left:1491px;top:355.8px;font-size:12.5px;color:#000;transform:scaleX(0.8205);transform-origin:0 0;">Temp. CCD</span>
<div class="r " style="left:1556px;top:357px;width:27px;height:15px;background:#fff;overflow:hidden;"></div>
<span class="t" style="left:1557.5px;top:357.8px;font-size:12.5px;color:#000;transform:scaleX(0.8364);transform-origin:0 0;">Roue</span>
<div class="r " style="left:1582px;top:356px;width:2px;height:17px;background:#fff;"></div>
<div class="r " style="left:1583.5px;top:355.5px;width:15px;height:15px;background:#f0f0f0;border:1px solid #c8c8c8;"></div>
<div class="r " style="left:1599.5px;top:355.5px;width:15px;height:15px;background:#f0f0f0;border:1px solid #c8c8c8;"></div>
<svg style="left:1583.500px;top:355.500px" width="32" height="15" viewBox="0 0 32 15"><path d="M9 4.500L5.500 7.500L9 10.500Z M22.500 4.500L26 7.500L22.500 10.500Z" fill="#000"/></svg>
<span class="t" style="left:1383px;top:380.5px;font-size:12.5px;color:#000;transform:scaleX(0.8325);transform-origin:0 0;">Temperature CCD: 20.00°C (Ext=29.44°C)</span>
<div class="r " style="left:1584px;top:378.5px;width:18px;height:17.5px;background:#efefef;border:1px solid #adadad;"></div>
<span class="t" style="left:1588.14px;top:379.5px;font-size:12.5px;color:#000;">G</span>
<span class="t" style="left:1383px;top:401.8px;font-size:12.5px;color:#000;transform:scaleX(0.8267);transform-origin:0 0;">Temp. CCD requise (°C)</span>
<div class="r " style="left:1499.5px;top:400px;width:49px;height:19.5px;background:#fff;border:1px solid #cfcfcf;"></div>
<span class="t" style="left:1503.5px;top:402.15px;font-size:12.5px;color:#8a8a8a;transform:scaleX(0.8600);transform-origin:0 0;">5.184</span>
<svg style="left:1534.5px;top:407.25px" width="10" height="6" viewBox="0 0 10 6"><path d="M1 1L5 5L9 1" fill="none" stroke="#b0b0b0" stroke-width="1.1"/></svg>
<div class="r " style="left:1559.5px;top:400.5px;width:42.5px;height:17.5px;background:#cccccc;border:1px solid #bfbfbf;"></div>
<span class="t" style="left:1569.25px;top:401.5px;font-size:12.5px;color:#838383;transform:scaleX(0.8070);transform-origin:0 0;">Appl.</span>
<span class="t" style="left:1383px;top:426.4px;font-size:12.5px;color:#000;transform:scaleX(0.8215);transform-origin:0 0;">Puissance refroidissement (%) : 9</span>
<div class="r " style="left:1584px;top:424.5px;width:18px;height:17.5px;background:#efefef;border:1px solid #adadad;"></div>
<span class="t" style="left:1588.14px;top:425.5px;font-size:12.5px;color:#000;">G</span>
<div class="r " style="left:1382px;top:446px;width:230px;height:16px;overflow:hidden;"></div>
<div class="r" style="left:1383px;top:446px;width:229px;height:16px;overflow:hidden"><span class="t" style="left:0px;top:0.8px;font-size:12.5px;color:#000;transform:scaleX(0.8426);transform-origin:0 0;">Consigne de température : 5.18419451715996600</span></div>
<div class="r " style="left:1383px;top:490.5px;width:52px;height:17.5px;background:#cccccc;border:1px solid #bfbfbf;"></div>
<span class="t" style="left:1395.5px;top:492.2px;font-size:12.5px;color:#838383;transform:scaleX(0.8268);transform-origin:0 0;">Editer</span>
<div class="r " style="left:1441px;top:490.5px;width:52px;height:17.5px;background:#efefef;border:1px solid #adadad;"></div>
<span class="t" style="left:1456px;top:492.2px;font-size:12.5px;color:#000;transform:scaleX(0.8554);transform-origin:0 0;">Stop</span>
<div class="r " style="left:1499px;top:490.5px;width:52px;height:17.5px;background:#cccccc;border:1px solid #bfbfbf;"></div>
<span class="t" style="left:1505.5px;top:492.2px;font-size:12.5px;color:#838383;transform:scaleX(0.8504);transform-origin:0 0;">Descen.</span>
<div class="r " style="left:1557px;top:490.5px;width:52px;height:17.5px;background:#cccccc;border:1px solid #bfbfbf;"></div>
<span class="t" style="left:1566.5px;top:492.2px;font-size:12.5px;color:#838383;transform:scaleX(0.8485);transform-origin:0 0;">Monter</span>
<div class="r " style="left:1371px;top:518px;width:248px;height:29px;background:#efefef;border:1px solid #adadad;"></div>
<svg style="left:1465px;top:526px" width="14" height="14" viewBox="0 0 14 14"><path d="M5 0H9V5H13L7 11L1 5H5Z" fill="#e60000"/><rect x="0" y="12" width="14" height="2" fill="#e60000"/></svg>
<span class="t" style="left:1484.5px;top:526.1px;font-size:12.5px;color:#000;transform:scaleX(0.8042);transform-origin:0 0;">Minimiser</span>
<!-- s_ctrl -->
<div class="r " style="left:1022px;top:688px;width:247px;height:276px;background:#fff;"></div>
<svg style="left:1018px;top:694px" width="6" height="10" viewBox="0 0 6 10"><path d="M6 0C1 1 0 3 0 5C0 7 1 9 6 10Z" fill="#fff"/></svg>
<span class="t" style="left:1025.5px;top:693px;font-size:12.5px;color:#9b9b9b;letter-spacing:-0.300px;">Contrôle des interrupteurs</span>
<div class="r " style="left:1249px;top:690px;width:18.5px;height:19px;background:#efefef;"></div>
<div class="r " style="left:1027px;top:723px;width:199px;height:15px;background:#fff;border-top:1px solid #9c9c9c;border-left:1px solid #9c9c9c;"></div>
<span class="t" style="left:1031.5px;top:723.5px;font-size:12.5px;color:#000;transform:scaleX(0.8437);transform-origin:0 0;">MiniPC</span>
<div class="r " style="left:1238px;top:721.3px;width:25px;height:22.5px;background:#d5e8f8;border:1px solid #2c6fa8;"></div>
<div class="r " style="left:1244px;top:726.3px;width:14px;height:13.5px;background:#ff4013;"></div>
<div class="r " style="left:1027px;top:748px;width:199px;height:15px;background:#fff;border-top:1px solid #9c9c9c;border-left:1px solid #9c9c9c;"></div>
<span class="t" style="left:1031.5px;top:748.5px;font-size:12.5px;color:#000;transform:scaleX(0.7751);transform-origin:0 0;">CCD</span>
<div class="r " style="left:1238px;top:746.3px;width:25px;height:22.5px;background:#d5e8f8;border:1px solid #2c6fa8;"></div>
<div class="r " style="left:1244px;top:751.3px;width:14px;height:13.5px;background:#ff4013;"></div>
<div class="r " style="left:1027px;top:773px;width:199px;height:15px;background:#fff;border-top:1px solid #9c9c9c;border-left:1px solid #9c9c9c;"></div>
<span class="t" style="left:1031.5px;top:773.5px;font-size:12.5px;color:#000;transform:scaleX(0.8498);transform-origin:0 0;">FOCUS_MONTURE_MOXA</span>
<div class="r " style="left:1238px;top:771.3px;width:25px;height:22.5px;background:#e3e3e3;border:1px solid #adadad;"></div>
<div class="r " style="left:1244px;top:776.3px;width:14px;height:13.5px;background:#12ff12;"></div>
<div class="r " style="left:1027px;top:798px;width:199px;height:15px;background:#fff;border-top:1px solid #9c9c9c;border-left:1px solid #9c9c9c;"></div>
<span class="t" style="left:1031.5px;top:798.5px;font-size:12.5px;color:#000;transform:scaleX(0.8481);transform-origin:0 0;">RESISTANCE</span>
<div class="r " style="left:1238px;top:796.3px;width:25px;height:22.5px;background:#e3e3e3;border:1px solid #adadad;"></div>
<div class="r " style="left:1244px;top:801.3px;width:14px;height:13.5px;background:#12ff12;"></div>
<div class="r " style="left:1065px;top:819.5px;width:159px;height:21.5px;background:#efefef;border:1px solid #adadad;"></div>
<span class="t" style="left:1122px;top:823.5px;font-size:12.5px;color:#000;transform:scaleX(0.8414);transform-origin:0 0;">Rafraichir</span>
<div class="r " style="left:1023px;top:844px;width:245px;height:28.5px;background:#efefef;border:1px solid #adadad;"></div>
<svg style="left:1115.5px;top:851.75px" width="14" height="14" viewBox="0 0 14 14"><path d="M5 0H9V5H13L7 11L1 5H5Z" fill="#e60000"/><rect x="0" y="12" width="14" height="2" fill="#e60000"/></svg>
<span class="t" style="left:1134.5px;top:851.85px;font-size:12.5px;color:#000;transform:scaleX(0.8042);transform-origin:0 0;">Minimiser</span>
<div class="r " style="left:1022px;top:874.5px;width:246.5px;height:88.5px;background:#fff;border:1px solid #a5a5a5;"></div>
<div class="r" style="left:1025.500px;top:877px;width:225px;height:56px;overflow:hidden"><span class="t" style="left:0px;top:-0.5px;font-size:12.5px;color:#000;transform:scaleX(0.8685);transform-origin:0 0;">22/01/2018 14:09:49 : Active port n°2 sur COU</span><span class="t" style="left:0px;top:12.5px;font-size:12.5px;color:#000;transform:scaleX(0.8641);transform-origin:0 0;">22/01/2018 14:09:50 : OK, Réponse(set) de l'ir</span><span class="t" style="left:0px;top:25.5px;font-size:12.5px;color:#000;transform:scaleX(0.8697);transform-origin:0 0;">22/01/2018 14:09:55 : Active port n°2 sur ACT</span><span class="t" style="left:0px;top:38.5px;font-size:12.5px;color:#000;transform:scaleX(0.8641);transform-origin:0 0;">22/01/2018 14:09:56 : OK, Réponse(set) de l'ir</span></div>
<div class="r " style="left:1251px;top:875.5px;width:16.5px;height:69px;background:#fff;"></div>
<div class="r " style="left:1251.5px;top:902.5px;width:14.5px;height:24.5px;background:#c8c8c8;"></div>
<div class="r " style="left:1023px;top:945px;width:228px;height:17px;background:#fff;"></div>
<div class="r " style="left:1041px;top:945.5px;width:57.5px;height:16.5px;background:#c6c6c6;"></div>
<svg style="left:1022px;top:874px" width="247" height="90" viewBox="0 0 247 90"><g fill="none" stroke="#505050" stroke-width="1.5"><path d="M233.500 13L237 9.500L240.500 13"/><path d="M233.500 59.500L237 63L240.500 59.500"/><path d="M12 75L8.500 78.500L12 82"/><path d="M218 75L221.500 78.500L218 82"/></g></svg>
<div class="r " style="left:1286px;top:905.5px;width:19px;height:18.5px;background:#efefef;"></div>
<!-- s_roue -->
<div class="r " style="left:1403px;top:695.5px;width:234px;height:1px;background:#ececec;"></div>
<span class="t" style="left:1406px;top:701px;font-size:12.5px;color:#9b9b9b;letter-spacing:-0.492px;">Roue à Filtres interne CCD (n°1)</span>
<div class="r " style="left:1618px;top:698.5px;width:18.5px;height:18px;background:#efefef;"></div>
<div class="r " style="left:1403.5px;top:727.5px;width:234px;height:120px;border:1px solid #dcdcdc;"></div>
<div class="r " style="left:1408px;top:720px;width:101px;height:14px;background:#fff;"></div>
<span class="t" style="left:1410.5px;top:720px;font-size:12.5px;color:#000;transform:scaleX(0.8710);transform-origin:0 0;">QSI FILTRES - v1.5</span>
<div class="r " style="left:1429.5px;top:736.8px;width:119px;height:15px;background:#fff;border-top:1px solid #9c9c9c;border-left:1px solid #9c9c9c;"></div>
<div class="r " style="left:1552px;top:736.8px;width:57px;height:15px;background:#fff;border-top:1px solid #9c9c9c;border-left:1px solid #9c9c9c;"></div>
<span class="t" style="left:1465px;top:737.3px;font-size:12.5px;color:#000;transform:scaleX(0.8501);transform-origin:0 0;">Nom Filtre</span>
<span class="t" style="left:1556.5px;top:737.3px;font-size:12.5px;color:#000;transform:scaleX(0.8405);transform-origin:0 0;">Déc. (mm)</span>
<div class="r " style="left:1429.5px;top:754.8px;width:119px;height:15px;background:#fff;border-top:1px solid #9c9c9c;border-left:1px solid #9c9c9c;"></div>
<div class="r " style="left:1552px;top:754.8px;width:57px;height:15px;background:#fff;border-top:1px solid #9c9c9c;border-left:1px solid #9c9c9c;"></div>
<span class="t" style="left:1486.75px;top:755.3px;font-size:12.5px;color:#000;">L</span>
<span class="t" style="left:1567.25px;top:755.3px;font-size:12.5px;color:#000;transform:scaleX(0.8791);transform-origin:0 0;">0.000</span>
<div class="r " style="left:1409px;top:756.3px;width:13px;height:13px;background:#fff;border:1px solid #333;"></div>
<div class="r " style="left:1429.5px;top:772.8px;width:119px;height:15px;background:#fff;border-top:1px solid #9c9c9c;border-left:1px solid #9c9c9c;"></div>
<div class="r " style="left:1552px;top:772.8px;width:57px;height:15px;background:#fff;border-top:1px solid #9c9c9c;border-left:1px solid #9c9c9c;"></div>
<span class="t" style="left:1483.5px;top:773.3px;font-size:12.5px;color:#000;transform:scaleX(0.8629);transform-origin:0 0;">Sii</span>
<span class="t" style="left:1567.25px;top:773.3px;font-size:12.5px;color:#000;transform:scaleX(0.8791);transform-origin:0 0;">0.294</span>
<div class="r " style="left:1409px;top:774.3px;width:13px;height:13px;background:#fff;border:1px solid #333;"></div>
<div class="r " style="left:1429.5px;top:790.8px;width:119px;height:15px;background:#fff;border-top:1px solid #9c9c9c;border-left:1px solid #9c9c9c;"></div>
<div class="r " style="left:1552px;top:790.8px;width:57px;height:15px;background:#fff;border-top:1px solid #9c9c9c;border-left:1px solid #9c9c9c;"></div>
<span class="t" style="left:1482.5px;top:791.3px;font-size:12.5px;color:#000;transform:scaleX(0.8759);transform-origin:0 0;">Ha</span>
<span class="t" style="left:1567.25px;top:791.3px;font-size:12.5px;color:#000;transform:scaleX(0.8791);transform-origin:0 0;">0.168</span>
<div class="r " style="left:1409px;top:792.3px;width:13px;height:13px;background:#fff;border:1px solid #333;"></div>
<div class="r " style="left:1429.5px;top:808.8px;width:119px;height:15px;background:#fff;border-top:1px solid #9c9c9c;border-left:1px solid #9c9c9c;"></div>
<div class="r " style="left:1552px;top:808.8px;width:57px;height:15px;background:#fff;border-top:1px solid #9c9c9c;border-left:1px solid #9c9c9c;"></div>
<span class="t" style="left:1482px;top:809.3px;font-size:12.5px;color:#000;transform:scaleX(0.8304);transform-origin:0 0;">Oiii</span>
<span class="t" style="left:1567.25px;top:809.3px;font-size:12.5px;color:#000;transform:scaleX(0.8791);transform-origin:0 0;">0.049</span>
<div class="r " style="left:1409px;top:810.3px;width:13px;height:13px;background:#fff;border:1px solid #333;"></div>
<div class="r " style="left:1429.5px;top:826.8px;width:119px;height:15px;background:#fff;border-top:1px solid #9c9c9c;border-left:1px solid #9c9c9c;"></div>
<div class="r " style="left:1552px;top:826.8px;width:57px;height:15px;background:#fff;border-top:1px solid #9c9c9c;border-left:1px solid #9c9c9c;"></div>
<span class="t" style="left:1464px;top:827.3px;font-size:12.5px;color:#000;transform:scaleX(0.8633);transform-origin:0 0;">Johnson V</span>
<span class="t" style="left:1566px;top:827.3px;font-size:12.5px;color:#000;transform:scaleX(0.8466);transform-origin:0 0;">-0.084</span>
<div class="r " style="left:1409px;top:828.3px;width:13px;height:13px;background:#fff;border:1px solid #333;"></div>
<div class="r " style="left:1409px;top:853px;width:117px;height:14.5px;background:#fff;border-top:1px solid #9c9c9c;border-left:1px solid #9c9c9c;"></div>
<span class="t" style="left:1413px;top:853px;font-size:12.5px;color:#000;transform:scaleX(0.8381);transform-origin:0 0;">Filtre de référence</span>
<div class="r " style="left:1529.5px;top:853px;width:65.5px;height:14.5px;background:#fff;border-top:1px solid #9c9c9c;border-left:1px solid #9c9c9c;"></div>
<span class="t" style="left:1559.5px;top:853px;font-size:12.5px;color:#000;">1</span>
<div class="r " style="left:1409px;top:873px;width:117px;height:14.5px;background:#fff;border-top:1px solid #9c9c9c;border-left:1px solid #9c9c9c;"></div>
<span class="t" style="left:1413px;top:873px;font-size:12.5px;color:#000;transform:scaleX(0.8381);transform-origin:0 0;">Foc de référence (mm)</span>
<div class="r " style="left:1529.5px;top:873px;width:65.5px;height:14.5px;background:#fff;border-top:1px solid #9c9c9c;border-left:1px solid #9c9c9c;"></div>
<span class="t" style="left:1546.25px;top:873px;font-size:12.5px;color:#000;transform:scaleX(0.8239);transform-origin:0 0;">10.101</span>
<div class="r " style="left:1599.5px;top:873px;width:33.5px;height:14.5px;background:#fff;border-top:1px solid #9c9c9c;border-left:1px solid #9c9c9c;"></div>
<span class="t" style="left:1609.75px;top:873px;font-size:12.5px;color:#000;transform:scaleX(0.8097);transform-origin:0 0;">Fix</span>
<div class="r " style="left:1410.5px;top:897px;width:13px;height:13px;background:#fff;border:1px solid #bcbcbc;"></div>
<svg style="left:1410.5px;top:897px" width="13" height="13" viewBox="0 0 13 13"><path d="M2.800 6.800L5.300 9.300L10.300 3.600" fill="none" stroke="#bcbcbc" stroke-width="1.3"/></svg>
<span class="t" style="left:1426.5px;top:896px;font-size:12.5px;color:#7c7c7c;transform:scaleX(0.8379);transform-origin:0 0;">Synchroniser la focalisation</span>
<div class="r " style="left:1567px;top:896.5px;width:66px;height:14.5px;background:#cccccc;border:1px solid #bfbfbf;"></div>
<span class="t" style="left:1570.5px;top:896px;font-size:12.5px;color:#838383;transform:scaleX(0.8698);transform-origin:0 0;">Foc ref. sav.</span>
<span class="t" style="left:1410.5px;top:917.5px;font-size:12.5px;color:#a0a0a0;transform:scaleX(0.8433);transform-origin:0 0;">Etat :  ......</span>
<div class="r " style="left:1404px;top:936.5px;width:233px;height:22px;background:#e9eef3;border:2px solid #0078d7;"></div>
<svg style="left:1490.5px;top:941px" width="14" height="14" viewBox="0 0 14 14"><path d="M5 0H9V5H13L7 11L1 5H5Z" fill="#e60000"/><rect x="0" y="12" width="14" height="2" fill="#e60000"/></svg>
<span class="t" style="left:1509px;top:941.1px;font-size:12.5px;color:#000;transform:scaleX(0.8042);transform-origin:0 0;">Minimiser</span>
<span class="t" style="left:1405px;top:963.5px;font-size:12.5px;color:#000;letter-spacing:-0.395px;">Etat : OK, connecté et prêt</span>
<!-- s_task -->
<div class="r " style="left:1899px;top:82px;width:19px;height:928px;background:#fff;"></div>
<div class="r " style="left:1902px;top:99px;width:15px;height:814.5px;background:#c6c6c6;"></div>
<svg style="left:1899px;top:82px" width="19" height="928" viewBox="0 0 19 928"><g fill="none" stroke="#505050" stroke-width="1.6"><path d="M6.500 11.500L10 8L13.500 11.500"/><path d="M5.500 917L9.500 921L13.500 917"/></g></svg>
<div class="r " style="left:0px;top:1010px;width:1920px;height:30px;background:#fff;border-top:1px solid #d9d9d9;"></div>
<div class="r " style="left:399px;top:1016px;width:1px;height:22px;background:#dedede;"></div>
<div class="r " style="left:799px;top:1016px;width:1px;height:22px;background:#dedede;"></div>
<div class="r " style="left:1050px;top:1010px;width:256px;height:2px;background:#fff;"></div>
<svg style="left:1894px;top:936px" width="26" height="56" viewBox="0 0 26 56"><path d="M1.500 4L4 1.500L26 1V56L1.500 38Z" fill="#5b6065"/><rect x="5.500" y="8" width="20.500" height="19" fill="#1c5a9c"/><circle cx="16.500" cy="17.500" r="7.500" fill="#2f7fd0"/><path d="M11 17.500L14 15V16.700H19V15L22 17.500L19 20V18.300H14V20Z" fill="#123a68"/></svg>
<div class="r " style="left:1625px;top:975px;width:275px;height:55px;background:#fff;border:1px solid #c6c6c6;box-shadow:0 0 2px rgba(0,0,0,.12);"></div>
<div class="r " style="left:1630.5px;top:980.5px;width:43.5px;height:43.5px;background:#eef2f4;border:1px solid #dde4e8;overflow:hidden;"></div>
<svg style="left:1631px;top:981px" width="43" height="43" viewBox="0 0 43 43"><circle cx="21.500" cy="13" r="8" fill="#c5d2d7"/><path d="M21.500 19c-4 0-6 4-6.500 9c-6 2-14 3-15 15h43c-1-12-9-13-15-15c-.5-5-2.500-9-6.500-9z" fill="#c5d2d7"/></svg>
<span class="t" style="left:1690.5px;top:996px;font-size:12.5px;color:#222;letter-spacing:-0.481px;">6 fichier(s) reçu(s) avec succès</span>
<svg style="left:1881px;top:998px" width="10" height="10" viewBox="0 0 10 10"><path d="M1.500 1.500L8.500 8.500M8.500 1.500L1.500 8.500" stroke="#7a7a7a" stroke-width="2"/></svg>
<svg style="left:1904px;top:998px" width="11" height="8" viewBox="0 0 11 8"><path d="M1.500 1.500L5.500 5.500L9.500 1.500" stroke="#444" stroke-width="1.600" fill="none"/></svg>
<div class="r " style="left:0px;top:1040px;width:1920px;height:40px;background:#000;"></div>
<div class="r " style="left:1915px;top:1040px;width:1px;height:40px;background:#4a4a4a;"></div>
<div class="r " style="left:48px;top:1040px;width:344px;height:40px;background:#f2f2f2;"></div>
<div class="r " style="left:1050px;top:1040px;width:256px;height:17px;background:#2b2b2b;"></div>
<svg style="left:15.500px;top:1052.500px" width="17" height="16" viewBox="0 0 17 16"><path d="M0 2.300L7 1.300V7.500H0Z M8 1.150L17 0V7.500H8Z M0 8.500H7V14.700L0 13.700Z M8 8.500H17V16L8 14.850Z" fill="#fff"/></svg>
<svg style="left:56.500px;top:1049.500px" width="22" height="22" viewBox="0 0 22 22"><circle cx="11" cy="11" r="8.600" fill="none" stroke="#111" stroke-width="2.600"/></svg>
<span class="t" style="left:88px;top:1050.5px;font-size:15px;color:#3a3a3a;letter-spacing:-0.123px;">Taper ici pour rechercher</span>
<svg style="left:365px;top:1051px" width="12" height="19" viewBox="0 0 12 19"><rect x="3.500" y="1" width="5" height="10" rx="2.500" fill="none" stroke="#333" stroke-width="1.200"/><path d="M1 8.500C1 15 11 15 11 8.500M6 13.500V17.500M3 17.500H9" fill="none" stroke="#333" stroke-width="1.200"/></svg>
<svg style="left:405px;top:1052px" width="22" height="17" viewBox="0 0 22 17"><rect x="5" y="1.500" width="12" height="14" fill="none" stroke="#fff" stroke-width="1.300"/><path d="M2.500 3.500H.700V13.500H2.500M19.500 3.500H21.300V13.500H19.500" fill="none" stroke="#fff" stroke-width="1.300"/></svg>
<svg style="left:456px;top:1049px" width="22" height="23" viewBox="0 0 22 23"><path d="M1 11.500C1.500 4 7 .500 11.500 .500C18 .500 21.500 5.500 21.500 12V14H7.500C7.800 18.500 13 20.500 20 17.500V21.500C10 25.500 2.500 21 2.500 14C2.500 10.500 5 8 7 7C5.500 8 4 9.500 1 11.500ZM7.600 10H15.500C15.500 4.500 8.500 4.500 7.600 10Z" fill="#1e7fd8" fill-rule="evenodd"/></svg>
<svg style="left:503px;top:1050px" width="25" height="21" viewBox="0 0 25 21"><path d="M1 2H9L11 4H24V20H1Z" fill="#f6c644"/><path d="M1 6H24V20H1Z" fill="#fbdc7c"/><path d="M8 13H17V20H8Z" fill="#3e9be0"/><rect x="10.500" y="16" width="4" height="4" fill="#fbdc7c"/></svg>
<svg style="left:554px;top:1048px" width="20" height="25" viewBox="0 0 20 25"><rect x=".500" y=".500" width="19" height="24" fill="#f4f4f4" stroke="#fff"/><rect x="3" y="3" width="14" height="5" fill="#555"/><g fill="#444"><rect x="3" y="10.500" width="3" height="2.500"/><rect x="8.500" y="10.500" width="3" height="2.500"/><rect x="14" y="10.500" width="3" height="2.500"/><rect x="3" y="14.500" width="3" height="2.500"/><rect x="8.500" y="14.500" width="3" height="2.500"/><rect x="14" y="14.500" width="3" height="2.500"/><rect x="3" y="18.500" width="3" height="2.500"/><rect x="8.500" y="18.500" width="3" height="2.500"/><rect x="14" y="18.500" width="3" height="2.500"/></g></svg>
<svg style="left:601.500px;top:1048.500px" width="24" height="24" viewBox="0 0 24 24"><defs><linearGradient id="gi" x1="0" y1="1" x2="1" y2="0"><stop offset="0" stop-color="#555"/><stop offset=".5" stop-color="#9a9a9a"/><stop offset="1" stop-color="#6a6a6a"/></linearGradient></defs><rect width="24" height="24" fill="url(#gi)"/><path d="M3 20L20 4L22 7L6 21Z" fill="#e4e4e4" opacity=".85"/></svg>
<svg width="0" height="0" style="left:0;top:0"><defs><linearGradient id="tbp" x1="0" y1="0" x2="0" y2="1"><stop offset="0" stop-color="#e01818"/><stop offset=".3" stop-color="#f0d820"/><stop offset=".55" stop-color="#28c838"/><stop offset=".8" stop-color="#2878e8"/><stop offset="1" stop-color="#7030c0"/></linearGradient></defs></svg>
<svg style="left:650.5px;top:1048.5px" width="24" height="22" viewBox="0 0 24 22"><path d="M12 4L20.500 18.500H3.500Z" fill="none" stroke="url(#tbp)" stroke-width="3.400" stroke-linejoin="round"/><path d="M4 18.800H20" stroke="#0a0a12" stroke-width="3" stroke-linecap="round"/></svg>
<svg style="left:699px;top:1048px" width="25" height="25" viewBox="0 0 25 25"><g fill="#f0b820"><circle cx="12.500" cy="3" r="1.400"/><circle cx="6.500" cy="5" r="1.400"/><circle cx="18.500" cy="5" r="1.400"/><circle cx="2.500" cy="9" r="1.300"/><circle cx="22.500" cy="9" r="1.300"/></g><path d="M12.500 5V8M7.500 6.500L9.500 9.500M17.500 6.500L15.500 9.500" stroke="#f0b820" stroke-width="1.300"/><path d="M1.500 14.500C6 8.500 17 8.500 22 13C19 20 8 22 1.500 14.500Z" fill="none" stroke="#f0b820" stroke-width="1.700"/><path d="M6 19C12 22.500 19 21 23.500 16" fill="none" stroke="#f0b820" stroke-width="1.300"/><circle cx="12.500" cy="14.500" r="3.600" fill="#c81818"/><circle cx="12.500" cy="14.500" r="1.500" fill="#400"/></svg>
<div class="r " style="left:737px;top:1040px;width:160px;height:40px;background:#383838;"></div>
<div class="r " style="left:737px;top:1078px;width:160px;height:2px;background:#76b9ed;"></div>
<svg style="left:745px;top:1048.5px" width="24" height="22" viewBox="0 0 24 22"><path d="M12 4L20.500 18.500H3.500Z" fill="none" stroke="url(#tbp)" stroke-width="3.400" stroke-linejoin="round"/><path d="M4 18.800H20" stroke="#0a0a12" stroke-width="3" stroke-linecap="round"/></svg>
<span class="t" style="left:775px;top:1052.5px;font-size:12px;color:#fff;letter-spacing:-0.262px;">PRISM - Version Av...</span>
<svg style="left:1557px;top:1051.500px" width="17" height="16" viewBox="0 0 20 19"><g fill="none" stroke="#fff" stroke-width="1.300"><circle cx="13" cy="5" r="3"/><path d="M8 14C8 8.500 18 8.500 18 14"/><circle cx="5.500" cy="10.500" r="2.300"/><path d="M1.500 17.500C1.500 13 9.500 13 9.500 17.500"/></g></svg>
<svg style="left:1593px;top:1052px" width="17" height="17" viewBox="0 0 19 19"><path d="M8 1C5.500 2.500 3 3 1 3V9C1 13 4 16 8 18C12 16 15 13 15 9V3C13 3 10.500 2.500 8 1Z" fill="#fff"/><path d="M8 1V18M1 9H15" stroke="#000" stroke-width="1.400"/><path d="M14 9L19 18H9Z" fill="#f2c21a"/><rect x="13.500" y="12" width="1.200" height="3.200" fill="#000"/><rect x="13.500" y="16" width="1.200" height="1.200" fill="#000"/></svg>
<svg style="left:1617px;top:1052.500px" width="12.500" height="15.500" viewBox="0 0 15 18"><path d="M1 6H5L11 0V18L5 12H1Z" fill="#e0462a"/><path d="M11 0V18" stroke="#8a1a10" stroke-width="1"/><path d="M13.500 6V12" stroke="#b02a1a" stroke-width="1"/></svg>
<svg style="left:1641px;top:1052px" width="16" height="16" viewBox="0 0 18 18"><rect width="18" height="18" rx="2" fill="#4a9ad8"/><rect x="2.500" y="2.500" width="13" height="9" fill="#bfe3f7" stroke="#1d5f9a"/><path d="M5 14.500H13M9 11.500V14.500" stroke="#e8d060" stroke-width="1.400"/><path d="M4 6H14M4 8.500H11" stroke="#2d6da6" stroke-width="1"/></svg>
<svg style="left:1665px;top:1052px" width="16" height="16" viewBox="0 0 18 18"><rect width="18" height="18" rx="2.500" fill="#1b83e0"/><circle cx="9" cy="9" r="6.500" fill="#fff"/><path d="M3.500 9L6.500 6.500V8H11.500V6.500L14.500 9L11.500 11.500V10H6.500V11.500Z" fill="#1b83e0"/></svg>
<svg style="left:1690.500px;top:1053px" width="15" height="15" viewBox="0 0 19 19"><g fill="none" stroke="#fff" stroke-width="1.300"><path d="M2 17C2 9 9 2.500 17 2.500"/><path d="M6 17C6 11.500 11 6.500 17 6.500" opacity=".9"/><path d="M10 17C10 13.500 13 10.500 17 10.500"/></g><circle cx="15.500" cy="15.500" r="1.600" fill="#fff"/></svg>
<svg style="left:1712px;top:1053.500px" width="17" height="13.500" viewBox="0 0 22 17"><path d="M1 5.500H4.500L9 1.500V15.500L4.500 11.500H1Z" fill="none" stroke="#fff" stroke-width="1.200"/><path d="M13 5.500L19 11.500M19 5.500L13 11.500" stroke="#fff" stroke-width="1.300"/></svg>
<svg style="left:1740.500px;top:1051.500px" width="17" height="18" viewBox="0 0 20 21"><g fill="none" stroke="#fff" stroke-width="1.300"><path d="M10 15C8 11 10 5 13 2.500C15 1 16.500 3 15 6C13.500 9.500 10.500 12 8 17.500"/><path d="M2 15C4 11 8 12 7 15C6 18 10 18 12 14C13.500 11 18 10 18.500 13"/></g></svg>
<svg style="left:1769px;top:1053px" width="24" height="14" viewBox="0 0 24 14"><rect x=".700" y=".700" width="22.600" height="12.600" rx="1" fill="none" stroke="#fff" stroke-width="1.200"/><g fill="#fff"><rect x="3" y="3.500" width="1.600" height="1.600"/><rect x="6" y="3.500" width="1.600" height="1.600"/><rect x="9" y="3.500" width="1.600" height="1.600"/><rect x="12" y="3.500" width="1.600" height="1.600"/><rect x="15" y="3.500" width="1.600" height="1.600"/><rect x="18" y="3.500" width="1.600" height="1.600"/><rect x="3" y="6.500" width="1.600" height="1.600"/><rect x="6" y="6.500" width="1.600" height="1.600"/><rect x="9" y="6.500" width="1.600" height="1.600"/><rect x="12" y="6.500" width="1.600" height="1.600"/><rect x="15" y="6.500" width="1.600" height="1.600"/><rect x="18" y="6.500" width="1.600" height="1.600"/><rect x="6" y="9.500" width="12" height="1.400"/></g></svg>
<span class="t" style="left:1819px;top:1043.5px;font-size:12px;color:#fff;letter-spacing:-1.004px;">14:17</span>
<span class="t" style="left:1802.5px;top:1061px;font-size:12px;color:#fff;letter-spacing:-0.226px;">22/01/2018</span>
<svg style="left:1878px;top:1052px" width="18" height="17" viewBox="0 0 18 17"><path d="M1 1H17V12.500H9.500L6 16V12.500H1Z" fill="none" stroke="#fff" stroke-width="1.300"/></svg>
</div></body></html>
